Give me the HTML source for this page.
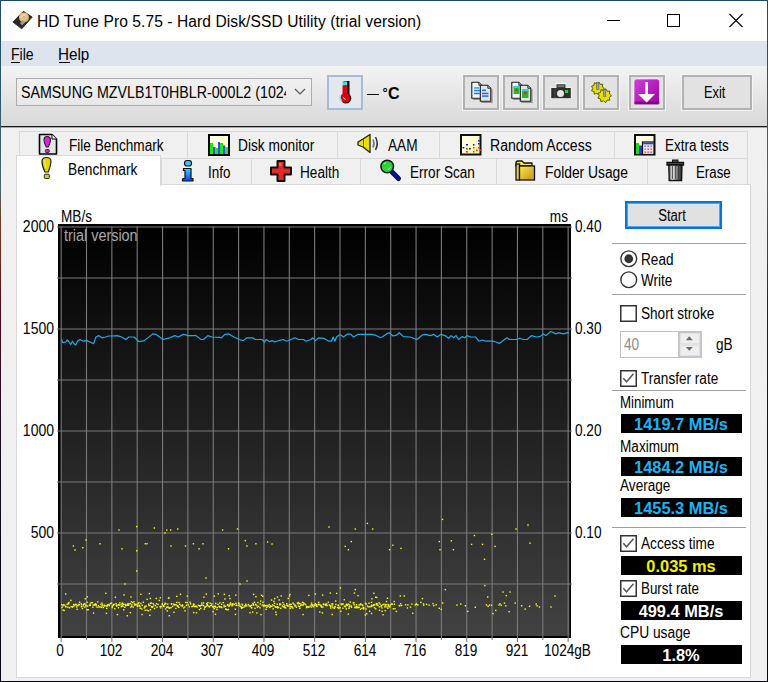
<!DOCTYPE html>
<html><head><meta charset="utf-8"><style>
html,body{margin:0;padding:0;width:768px;height:682px;overflow:hidden;background:#f0f0f0}
body{position:relative;font-family:"Liberation Sans",sans-serif}
.r{position:absolute;display:block}
.t{position:absolute;white-space:pre}
</style></head><body>
<div class="r" style="left:0px;top:0px;width:768px;height:682px;background:#f0f0f0"></div>
<div class="r" style="left:1px;top:1px;width:766px;height:40px;background:#fff"></div>
<div class="r" style="left:1px;top:41px;width:766px;height:25px;background:#dde4ee"></div>
<div class="r" style="left:1px;top:66px;width:766px;height:60px;background:linear-gradient(#f3f3f3,#d8d8d8)"></div>
<div class="r" style="left:1px;top:126px;width:766px;height:1px;background:#1a1a1a"></div>
<div class="r" style="left:1px;top:127px;width:766px;height:1px;background:#a8a8a8"></div>
<div class="r" style="left:0px;top:0px;width:768px;height:1px;background:#1a4a6a"></div>
<div class="r" style="left:0px;top:0px;width:1px;height:682px;background:linear-gradient(#1a4a6a 0px,#2f5a6c 100px,#4a6468 190px,#6e3a1e 225px,#6a301c 260px,#5a0a20 300px,#3a0a20 360px,#1a0c20 430px,#060818 560px,#060818 682px)"></div>
<div class="r" style="left:767px;top:0px;width:1px;height:682px;background:linear-gradient(#1a4a6a 0px,#2f5a6c 100px,#4a6468 190px,#6e3a1e 225px,#6a301c 260px,#5a0a20 300px,#3a0a20 360px,#1a0c20 430px,#060818 560px,#060818 682px)"></div>
<div class="r" style="left:0px;top:681px;width:768px;height:1px;background:#060818"></div>
<svg class="r" style="left:11px;top:9px;" width="24" height="22" viewBox="0 0 24 22">
<defs><radialGradient id="pl" cx="0.45" cy="0.4" r="0.6"><stop offset="0" stop-color="#fde3a8"/><stop offset="1" stop-color="#e9a545"/></radialGradient></defs>
<polygon points="12.4,2.3 21.2,8.1 10.7,19.8 1.9,13" fill="#2a2a2a" stroke="#111" stroke-width="0.8" stroke-linejoin="round"/>
<circle cx="13" cy="8.5" r="5" fill="url(#pl)"/>
<circle cx="13" cy="8.5" r="1.7" fill="#bdbdbd"/>
<polygon points="9,14 12,11 14,13.5 11,16.5" fill="#9a9a9a"/>
</svg>
<div class="t" style="left:37.00px;transform-origin:0 0;top:14.39px;font-size:15.6px;line-height:15.6px;font-weight:normal;color:#000;letter-spacing:0.07px;">HD Tune Pro 5.75 - Hard Disk/SSD Utility (trial version)</div>
<svg class="r" style="left:600px;top:8px;" width="150" height="26" viewBox="0 0 150 26">
<line x1="7" y1="12.5" x2="20" y2="12.5" stroke="#000" stroke-width="1"/>
<rect x="67.5" y="6.5" width="12" height="12" fill="none" stroke="#000" stroke-width="1"/>
<line x1="129.5" y1="6" x2="142.5" y2="19" stroke="#000" stroke-width="1.1"/>
<line x1="142.5" y1="6" x2="129.5" y2="19" stroke="#000" stroke-width="1.1"/>
</svg>
<div class="t" style="left:11.00px;transform-origin:0 0;top:46.96px;font-size:16px;line-height:16px;font-weight:normal;color:#000;letter-spacing:0px;transform:scaleX(0.88);">File</div>
<div class="t" style="left:58.00px;transform-origin:0 0;top:46.96px;font-size:16px;line-height:16px;font-weight:normal;color:#000;letter-spacing:0px;transform:scaleX(0.95);">Help</div>
<div class="r" style="left:11px;top:62px;width:9px;height:1px;background:#000"></div>
<div class="r" style="left:59px;top:62px;width:11px;height:1px;background:#000"></div>
<div class="r" style="left:16px;top:78px;width:296px;height:28px;box-sizing:border-box;border:1px solid #acacac;background:linear-gradient(#f0f0f0,#e8e8e8)"></div>
<div class="r" style="left:17px;top:79px;width:269px;height:26px;overflow:hidden">
<div class="t" style="left:4.00px;transform-origin:0 0;top:5.96px;font-size:16px;line-height:16px;font-weight:normal;color:#000;letter-spacing:0px;transform:scaleX(0.89);">SAMSUNG MZVLB1T0HBLR-000L2 (1024 GB)</div>
</div>
<svg class="r" style="left:292px;top:86px;" width="16" height="12" viewBox="0 0 16 12"><polyline points="3,3 8,8 13,3" fill="none" stroke="#555" stroke-width="1.2"/></svg>
<div class="r" style="left:327px;top:75px;width:36px;height:35px;box-sizing:border-box;border:2px solid #a3bdd9;background:#e4e8ed"></div>
<svg class="r" style="left:335px;top:78px;" width="20" height="28" viewBox="0 0 20 28">
<rect x="8.5" y="3" width="6" height="19" fill="#111"/>
<rect x="7.5" y="3.5" width="4.5" height="4" fill="#40e0e8"/>
<rect x="7.5" y="7.5" width="4.5" height="13" fill="#e00010"/>
<circle cx="11" cy="20.3" r="5.3" fill="#111"/>
<circle cx="10.2" cy="19.8" r="4.8" fill="#e00010"/>
<path d="M5.2,17.5 A5,5 0 0,0 6.5,23" fill="none" stroke="#8de8ee" stroke-width="1.6"/>
<path d="M8.5,19.5 Q8.8,21 10.5,21.2" fill="none" stroke="#fff" stroke-width="1"/>
</svg>
<div class="r" style="left:367px;top:93.9px;width:11.5px;height:1.5px;background:#111"></div>
<div class="t" style="left:382.60px;transform-origin:0 0;top:85.50px;font-size:13px;line-height:13px;font-weight:bold;color:#000;letter-spacing:0px;">&#176;</div>
<div class="t" style="left:388.00px;transform-origin:0 0;top:86.06px;font-size:16px;line-height:16px;font-weight:bold;color:#000;letter-spacing:0px;">C</div>
<div class="r" style="left:463px;top:75.3px;width:36px;height:35px;box-sizing:border-box;border:2px solid #b2b2b2;box-shadow:0 0 0 1px #f4f4f4;background:#e2e2e2"></div>
<div class="r" style="left:503px;top:75.3px;width:36px;height:35px;box-sizing:border-box;border:2px solid #b2b2b2;box-shadow:0 0 0 1px #f4f4f4;background:#e2e2e2"></div>
<div class="r" style="left:543px;top:75.3px;width:36px;height:35px;box-sizing:border-box;border:2px solid #b2b2b2;box-shadow:0 0 0 1px #f4f4f4;background:#e2e2e2"></div>
<div class="r" style="left:583px;top:75.3px;width:36px;height:35px;box-sizing:border-box;border:2px solid #b2b2b2;box-shadow:0 0 0 1px #f4f4f4;background:#e2e2e2"></div>
<div class="r" style="left:629px;top:75.3px;width:36px;height:35px;box-sizing:border-box;border:2px solid #b2b2b2;box-shadow:0 0 0 1px #f4f4f4;background:#e2e2e2"></div>
<svg class="r" style="left:468px;top:79px;" width="28" height="26" viewBox="0 0 28 26"><path d="M15.0,7.3 L15.0,20.5 L4.8,20.5" fill="none" stroke="#000" stroke-width="1.2" opacity="0.35"/><path d="M3.8,3.3 L10.8,3.3 L13.8,6.3 L13.8,19.3 L3.8,19.3 Z" fill="#f6f6f6" stroke="#1a1a1a" stroke-width="1.1" stroke-linejoin="round"/><path d="M10.8,3.3 L10.8,6.3 L13.8,6.3" fill="#aaa" stroke="#1a1a1a" stroke-width="0.8"/><path d="M24.0,10.3 L24.0,23.5 L13.3,23.5" fill="none" stroke="#000" stroke-width="1.2" opacity="0.35"/><path d="M12.3,6.3 L19.8,6.3 L22.8,9.3 L22.8,22.3 L12.3,22.3 Z" fill="#e4e4e4" stroke="#1a1a1a" stroke-width="1.1" stroke-linejoin="round"/><path d="M19.8,6.3 L19.8,9.3 L22.8,9.3" fill="#aaa" stroke="#1a1a1a" stroke-width="0.8"/><rect x="6" y="8.2" width="5" height="1.5" fill="#30a0f0"/><rect x="6" y="10.8" width="6" height="1.5" fill="#1080f0"/><rect x="6" y="13.7" width="6" height="1.5" fill="#1080f0"/><rect x="14" y="10.6" width="4" height="1.5" fill="#1070f0"/><rect x="14" y="13.7" width="6.5" height="1.5" fill="#1070f0"/><rect x="14" y="16.2" width="6.5" height="1.8" fill="#3a80f0"/></svg>
<svg class="r" style="left:508px;top:79px;" width="28" height="26" viewBox="0 0 28 26"><path d="M15.0,7.3 L15.0,20.5 L4.8,20.5" fill="none" stroke="#000" stroke-width="1.2" opacity="0.35"/><path d="M3.8,3.3 L10.8,3.3 L13.8,6.3 L13.8,19.3 L3.8,19.3 Z" fill="#f6f6f6" stroke="#1a1a1a" stroke-width="1.1" stroke-linejoin="round"/><path d="M10.8,3.3 L10.8,6.3 L13.8,6.3" fill="#aaa" stroke="#1a1a1a" stroke-width="0.8"/><path d="M24.0,10.3 L24.0,23.5 L13.3,23.5" fill="none" stroke="#000" stroke-width="1.2" opacity="0.35"/><path d="M12.3,6.3 L19.8,6.3 L22.8,9.3 L22.8,22.3 L12.3,22.3 Z" fill="#e4e4e4" stroke="#1a1a1a" stroke-width="1.1" stroke-linejoin="round"/><path d="M19.8,6.3 L19.8,9.3 L22.8,9.3" fill="#aaa" stroke="#1a1a1a" stroke-width="0.8"/><rect x="5.5" y="7" width="6" height="8" fill="#20c020"/><rect x="5.5" y="7" width="6" height="2" fill="#30d0f0"/><rect x="7.5" y="10" width="2" height="2" fill="#d03020"/><rect x="14" y="10" width="6.5" height="9" fill="#20c020"/><rect x="14" y="10" width="6.5" height="2" fill="#30d0f0"/><rect x="16" y="13" width="2.5" height="2.5" fill="#d03020"/></svg>
<svg class="r" style="left:549px;top:81px;" width="24" height="20" viewBox="0 0 24 20">
<path d="M1.5,6.5 L7,6.5 L7,3 Q7,2 8,2 L16,2 Q17,2 17,3 L17,6.5 L22.5,6.5 L22.5,18 L1.5,18 Z" fill="#fff" opacity="0.9"/>
<path d="M2.2,7 L7.5,7 L7.5,3.3 L16.5,3.3 L16.5,7 L21.8,7 L21.8,17.3 L2.2,17.3 Z" fill="#2e2e2e"/>
<rect x="8.5" y="4.2" width="7" height="2" fill="#777"/>
<line x1="6" y1="7.5" x2="6" y2="17" stroke="#555" stroke-width="0.8"/>
<circle cx="11.5" cy="12.6" r="3.5" fill="#e6e6e6"/>
<rect x="16" y="9" width="3.2" height="3" fill="#10e020"/>
</svg>
<svg class="r" style="left:588px;top:79px;" width="28" height="26" viewBox="0 0 28 26"><polygon points="16.30,9.50 14.29,11.17 14.76,13.74 12.14,13.73 10.85,16.00 8.85,14.31 6.40,15.22 5.96,12.64 3.50,11.76 4.82,9.50 3.50,7.24 5.96,6.36 6.40,3.78 8.85,4.69 10.85,3.00 12.14,5.27 14.76,5.26 14.29,7.83" fill="#e4e000" stroke="#5a5a00" stroke-width="1" stroke-linejoin="round"/><polygon points="23.50,16.70 21.37,18.47 21.86,21.20 19.09,21.19 17.72,23.59 15.60,21.80 13.00,22.76 12.53,20.03 9.92,19.09 11.32,16.70 9.92,14.31 12.53,13.37 13.00,10.64 15.60,11.60 17.72,9.81 19.09,12.21 21.86,12.20 21.37,14.93" fill="#e4e000" stroke="#5a5a00" stroke-width="1" stroke-linejoin="round"/><rect x="8.6" y="3.5" width="2.4" height="7" fill="#9aa0b0" stroke="#555" stroke-width="0.5"/><rect x="15.4" y="10.5" width="2.4" height="7" fill="#9aa0b0" stroke="#555" stroke-width="0.5"/></svg>
<svg class="r" style="left:633px;top:78px;" width="28" height="28" viewBox="0 0 28 28">
<defs><linearGradient id="pg" x1="0" y1="0" x2="1" y2="1"><stop offset="0" stop-color="#d040d8"/><stop offset="1" stop-color="#a000a8"/></linearGradient></defs>
<rect x="1" y="1" width="25.5" height="25.5" rx="2.5" fill="url(#pg)" stroke="#fff" stroke-width="0.6"/>
<rect x="1" y="23.5" width="25.5" height="3" rx="1.5" fill="#700078" opacity="0.7"/>
<rect x="12.3" y="4" width="2.6" height="17" fill="#fff"/>
<polygon points="5,16 22,16 13.6,24.5" fill="#fff"/>
</svg>
<div class="r" style="left:682px;top:75.3px;width:70px;height:35px;box-sizing:border-box;border:2px solid #b2b2b2;box-shadow:0 0 0 1px #f4f4f4;background:#e2e2e2"></div>
<div class="t" style="left:704.00px;transform-origin:0 0;top:85.06px;font-size:16px;line-height:16px;font-weight:normal;color:#000;letter-spacing:0px;transform:scaleX(0.8);">Exit</div>
<div class="r" style="left:16px;top:184px;width:735px;height:494px;box-sizing:border-box;border:1px solid #d9d9d9;background:#fff"></div>
<div class="r" style="left:19px;top:131px;width:169px;height:28px;box-sizing:border-box;border:1px solid #d9d9d9;background:#f0f0f0"></div>
<div class="r" style="left:187px;top:131px;width:151px;height:28px;box-sizing:border-box;border:1px solid #d9d9d9;background:#f0f0f0"></div>
<div class="r" style="left:337px;top:131px;width:103px;height:28px;box-sizing:border-box;border:1px solid #d9d9d9;background:#f0f0f0"></div>
<div class="r" style="left:439px;top:131px;width:176px;height:28px;box-sizing:border-box;border:1px solid #d9d9d9;background:#f0f0f0"></div>
<div class="r" style="left:614px;top:131px;width:134px;height:28px;box-sizing:border-box;border:1px solid #d9d9d9;background:#f0f0f0"></div>
<div class="r" style="left:161px;top:158px;width:91px;height:27px;box-sizing:border-box;border:1px solid #d9d9d9;background:#f0f0f0"></div>
<div class="r" style="left:251px;top:158px;width:110px;height:27px;box-sizing:border-box;border:1px solid #d9d9d9;background:#f0f0f0"></div>
<div class="r" style="left:360px;top:158px;width:137px;height:27px;box-sizing:border-box;border:1px solid #d9d9d9;background:#f0f0f0"></div>
<div class="r" style="left:496px;top:158px;width:152px;height:27px;box-sizing:border-box;border:1px solid #d9d9d9;background:#f0f0f0"></div>
<div class="r" style="left:647px;top:158px;width:101px;height:27px;box-sizing:border-box;border:1px solid #d9d9d9;background:#f0f0f0"></div>
<div class="r" style="left:16px;top:155px;width:145px;height:31px;box-sizing:border-box;border:1px solid #d9d9d9;border-bottom:none;background:#fff"></div>
<div class="t" style="left:69.00px;transform-origin:0 0;top:138.06px;font-size:16px;line-height:16px;font-weight:normal;color:#000;letter-spacing:0px;transform:scaleX(0.851);">File Benchmark</div>
<div class="t" style="left:237.50px;transform-origin:0 0;top:138.06px;font-size:16px;line-height:16px;font-weight:normal;color:#000;letter-spacing:0px;transform:scaleX(0.857);">Disk monitor</div>
<div class="t" style="left:387.50px;transform-origin:0 0;top:138.06px;font-size:16px;line-height:16px;font-weight:normal;color:#000;letter-spacing:0px;transform:scaleX(0.853);">AAM</div>
<div class="t" style="left:489.50px;transform-origin:0 0;top:138.06px;font-size:16px;line-height:16px;font-weight:normal;color:#000;letter-spacing:0px;transform:scaleX(0.88);">Random Access</div>
<div class="t" style="left:664.50px;transform-origin:0 0;top:138.06px;font-size:16px;line-height:16px;font-weight:normal;color:#000;letter-spacing:0px;transform:scaleX(0.843);">Extra tests</div>
<div class="t" style="left:67.50px;transform-origin:0 0;top:161.66px;font-size:16px;line-height:16px;font-weight:normal;color:#000;letter-spacing:0px;transform:scaleX(0.857);">Benchmark</div>
<div class="t" style="left:207.50px;transform-origin:0 0;top:164.66px;font-size:16px;line-height:16px;font-weight:normal;color:#000;letter-spacing:0px;transform:scaleX(0.84);">Info</div>
<div class="t" style="left:300.00px;transform-origin:0 0;top:164.66px;font-size:16px;line-height:16px;font-weight:normal;color:#000;letter-spacing:0px;transform:scaleX(0.851);">Health</div>
<div class="t" style="left:410.00px;transform-origin:0 0;top:164.66px;font-size:16px;line-height:16px;font-weight:normal;color:#000;letter-spacing:0px;transform:scaleX(0.848);">Error Scan</div>
<div class="t" style="left:545.00px;transform-origin:0 0;top:164.66px;font-size:16px;line-height:16px;font-weight:normal;color:#000;letter-spacing:0px;transform:scaleX(0.864);">Folder Usage</div>
<div class="t" style="left:696.00px;transform-origin:0 0;top:164.66px;font-size:16px;line-height:16px;font-weight:normal;color:#000;letter-spacing:0px;transform:scaleX(0.83);">Erase</div>
<svg class="r" style="left:37px;top:132px;" width="22" height="24" viewBox="0 0 22 24">
<path d="M2.5,2.5 L15,2.5 L19.5,7 L19.5,22 L2.5,22 Z" fill="#e4e4e4" stroke="#000" stroke-width="1.6" stroke-linejoin="round"/>
<path d="M15,2.5 L15,7 L19.5,7" fill="#fff" stroke="#000" stroke-width="1"/>
<path d="M10,4.5 Q13.5,4.5 13.5,8 Q13.3,11 11.3,15 L9.3,15 Q7,11 7,8 Q7,4.5 10,4.5 Z" fill="#e020e0" stroke="#202020" stroke-width="1.1"/>
<rect x="8.3" y="17.5" width="4" height="3" rx="1" fill="#e020e0" stroke="#202020" stroke-width="0.9"/>
</svg>
<svg class="r" style="left:40px;top:156px;" width="14" height="25" viewBox="0 0 14 25">
<path d="M6.5,1.5 Q11,1.5 11,5.5 Q10.8,10 8.3,16 L5,16 Q2,10 2,5.5 Q2,1.5 6.5,1.5 Z" fill="#e0d800" stroke="#202020" stroke-width="1.2"/>
<path d="M4.5,4 Q4.5,8 6,12" fill="none" stroke="#f8f080" stroke-width="1"/>
<rect x="4.3" y="18.2" width="5" height="4.3" rx="1" fill="#d8d000" stroke="#202020" stroke-width="1"/>
</svg>
<svg class="r" style="left:206px;top:132px;" width="26" height="26" viewBox="0 0 26 26">
<defs><linearGradient id="dm" x1="0" y1="0" x2="1" y2="1"><stop offset="0" stop-color="#fffff4"/><stop offset="1" stop-color="#fff8a8"/></linearGradient></defs>
<rect x="3" y="3" width="20" height="20" fill="url(#dm)" stroke="#000" stroke-width="2"/>
<rect x="4" y="11" width="3" height="11" fill="#10f010"/>
<rect x="7" y="15" width="2.5" height="7" fill="#4040ff"/>
<rect x="9.5" y="16" width="2.5" height="6" fill="#10f010"/>
<rect x="12" y="10" width="2" height="12" fill="#4040ff"/>
<rect x="14" y="11" width="3" height="11" fill="#10f010"/>
<rect x="17" y="13.5" width="2.2" height="8.5" fill="#4040ff"/>
<rect x="19.2" y="15" width="2.8" height="7" fill="#10f010"/>
</svg>
<svg class="r" style="left:179px;top:158px;" width="17" height="25" viewBox="0 0 17 25">
<defs><linearGradient id="ib" x1="0" y1="0" x2="0" y2="1"><stop offset="0" stop-color="#40d0ff"/><stop offset="1" stop-color="#0040f0"/></linearGradient></defs>
<rect x="5.5" y="2.5" width="7" height="5.5" rx="2.5" fill="#30c8ff" stroke="#101010" stroke-width="1.2"/>
<path d="M4.5,10.5 L12,10.5 L12,20.5 L14,20.5 L14,23 L3.5,23 L3.5,21 L6,20 L6,12.5 L4.5,12.5 Z" fill="url(#ib)" stroke="#101010" stroke-width="1.2" stroke-linejoin="round"/>
</svg>
<svg class="r" style="left:268px;top:158px;" width="26" height="26" viewBox="0 0 26 26">
<path d="M9.5,3 L16.5,3 L16.5,9.5 L23,9.5 L23,16.5 L16.5,16.5 L16.5,23 L9.5,23 L9.5,16.5 L3,16.5 L3,9.5 L9.5,9.5 Z" fill="#e02a2a" stroke="#101010" stroke-width="2" stroke-linejoin="round"/>
<rect x="11" y="5" width="2.5" height="3" fill="#f46060"/>
</svg>
<svg class="r" style="left:355px;top:132px;" width="27" height="24" viewBox="0 0 27 24">
<path d="M3,10 L8,7 L15,2.5 L15,20.5 L8,15 L3,13 Z" fill="#e8e000" stroke="#202020" stroke-width="1.3" stroke-linejoin="round"/>
<line x1="8.5" y1="7" x2="8.5" y2="15" stroke="#606000" stroke-width="0.9"/>
<path d="M18,7.5 Q20,11.5 18,15.5" fill="none" stroke="#777" stroke-width="1.6"/>
<path d="M20.5,5 Q24,11.5 20.5,18" fill="none" stroke="#333" stroke-width="1.5"/>
</svg>
<svg class="r" style="left:378px;top:158px;" width="25" height="25" viewBox="0 0 25 25">
<line x1="12" y1="12" x2="20.5" y2="20.5" stroke="#101010" stroke-width="5" stroke-linecap="round"/>
<line x1="12" y1="12" x2="20.5" y2="20.5" stroke="#0010c0" stroke-width="3" stroke-linecap="round"/>
<circle cx="9.2" cy="8.5" r="6.3" fill="#30d040" stroke="#101010" stroke-width="1.5"/>
<path d="M6,6 L8,4.5" stroke="#b0ffb0" stroke-width="1"/><path d="M10,11.5 L12.5,9.5" stroke="#b0ffb0" stroke-width="1"/>
</svg>
<svg class="r" style="left:458px;top:132px;" width="25" height="25" viewBox="0 0 25 25">
<defs><linearGradient id="ra" x1="0" y1="0" x2="1" y2="1"><stop offset="0" stop-color="#ffffff"/><stop offset="1" stop-color="#fff890"/></linearGradient></defs>
<rect x="3" y="3" width="19.5" height="19.5" fill="url(#ra)" stroke="#101010" stroke-width="2"/>
<g fill="#1010f0"><rect x="8" y="12" width="2" height="1.5"/><rect x="15" y="12" width="1.5" height="1.5"/><rect x="20" y="8" width="1.5" height="1.5"/><rect x="20" y="11" width="1.5" height="1.5"/><rect x="4.5" y="15" width="1.8" height="1.5"/><rect x="11" y="16" width="1.8" height="1.5"/></g>
<g fill="#ff2020"><rect x="8" y="16" width="1.8" height="1.5"/><rect x="8" y="19" width="1.8" height="1.5"/><rect x="15" y="15" width="1.5" height="1.5"/><rect x="15" y="19" width="1.5" height="1.5"/><rect x="20" y="15" width="1.5" height="1.5"/><rect x="18" y="17.5" width="1.5" height="1.5"/><rect x="22" y="17.5" width="1.5" height="1.5"/><rect x="5" y="21" width="1.5" height="1.3"/></g>
</svg>
<svg class="r" style="left:513px;top:158px;" width="25" height="25" viewBox="0 0 25 25">
<defs><linearGradient id="fd" x1="0" y1="0" x2="1" y2="1"><stop offset="0" stop-color="#fae860"/><stop offset="1" stop-color="#c89000"/></linearGradient></defs>
<path d="M3,5 Q3,3 5,3 L9,3 L11,5 L19,5 L19,8 L3,8 Z" fill="#f0e070" stroke="#101010" stroke-width="1.3" stroke-linejoin="round"/>
<rect x="3" y="6" width="3.5" height="16" fill="#e8d040" stroke="#101010" stroke-width="1.3"/>
<rect x="6.5" y="8" width="15" height="14" fill="url(#fd)" stroke="#101010" stroke-width="1.3"/>
<line x1="19" y1="8.5" x2="19" y2="21.5" stroke="#b0b0a0" stroke-width="0.8"/>
</svg>
<svg class="r" style="left:632px;top:132px;" width="26" height="25" viewBox="0 0 26 25">
<defs><linearGradient id="et" x1="0" y1="0" x2="1" y2="1"><stop offset="0" stop-color="#ffffff"/><stop offset="1" stop-color="#fff8b0"/></linearGradient></defs>
<rect x="3" y="3" width="19.5" height="19.5" fill="url(#et)" stroke="#101010" stroke-width="2"/>
<rect x="4" y="11" width="3" height="11" fill="#10e010"/>
<rect x="7" y="13.5" width="3" height="8.5" fill="#3030ff"/>
<rect x="10.5" y="10" width="11.5" height="12.5" fill="#e6e6e6" stroke="#101010" stroke-width="1.2"/>
<rect x="11.2" y="10.7" width="10.2" height="1.6" fill="#2040f0"/>
<g fill="#ff2020"><rect x="12.5" y="13.5" width="1.3" height="1.3"/><rect x="18.5" y="13.5" width="1.3" height="1.3"/><rect x="15.5" y="16.5" width="1.3" height="1.3"/><rect x="18.5" y="16.5" width="1.3" height="1.3"/><rect x="12.5" y="19.5" width="1.3" height="1.3"/><rect x="15.5" y="19.5" width="1.3" height="1.3"/></g>
<g fill="#2040ff"><rect x="15.5" y="13.5" width="1.3" height="1.3"/><rect x="18.5" y="19.5" width="1.3" height="1.3"/></g>
<g fill="#20c020"><rect x="12.5" y="16.5" width="1.3" height="1.3"/></g>
</svg>
<svg class="r" style="left:664px;top:158px;" width="24" height="25" viewBox="0 0 24 25">
<defs><linearGradient id="tr" x1="0" y1="0" x2="1" y2="0"><stop offset="0" stop-color="#505050"/><stop offset="0.28" stop-color="#f4f4f4"/><stop offset="0.5" stop-color="#a0a0a0"/><stop offset="0.8" stop-color="#505050"/><stop offset="1" stop-color="#202020"/></linearGradient></defs>
<path d="M3,4.5 L19.5,4.5 L19.5,7 L3,7 Z" fill="#555" stroke="#101010" stroke-width="1.3"/>
<rect x="8.5" y="2" width="5.5" height="2.5" fill="#444" stroke="#101010" stroke-width="1"/>
<path d="M4.8,7 L18,7 L17.6,22.5 L5.2,22.5 Z" fill="url(#tr)" stroke="#101010" stroke-width="1.3"/>
<line x1="8.5" y1="8" x2="8.5" y2="21" stroke="#303030" stroke-width="0.8"/>
<line x1="11.5" y1="8" x2="11.5" y2="21" stroke="#404040" stroke-width="0.8"/>
<line x1="14.5" y1="8" x2="14.5" y2="21" stroke="#303030" stroke-width="0.8"/>
</svg>
<svg class="r" style="left:40px;top:210px;" width="580" height="460" viewBox="0 0 580 460"><defs><linearGradient id="cg" x1="0" y1="0" x2="0" y2="1"><stop offset="0" stop-color="#000"/><stop offset="1" stop-color="#424242"/></linearGradient></defs><rect x="18" y="14" width="513" height="414" fill="#000"/><rect x="21" y="17" width="508.5" height="409" fill="url(#cg)"/><line x1="21.15" y1="16.5" x2="21.15" y2="432" stroke="#7a7a7a" stroke-width="1.1"/><line x1="46.50" y1="16.5" x2="46.50" y2="430" stroke="#7a7a7a" stroke-width="1.1"/><line x1="71.85" y1="16.5" x2="71.85" y2="432" stroke="#7a7a7a" stroke-width="1.1"/><line x1="97.20" y1="16.5" x2="97.20" y2="430" stroke="#7a7a7a" stroke-width="1.1"/><line x1="122.55" y1="16.5" x2="122.55" y2="432" stroke="#7a7a7a" stroke-width="1.1"/><line x1="147.90" y1="16.5" x2="147.90" y2="430" stroke="#7a7a7a" stroke-width="1.1"/><line x1="173.25" y1="16.5" x2="173.25" y2="432" stroke="#7a7a7a" stroke-width="1.1"/><line x1="198.60" y1="16.5" x2="198.60" y2="430" stroke="#7a7a7a" stroke-width="1.1"/><line x1="223.95" y1="16.5" x2="223.95" y2="432" stroke="#7a7a7a" stroke-width="1.1"/><line x1="249.30" y1="16.5" x2="249.30" y2="430" stroke="#7a7a7a" stroke-width="1.1"/><line x1="274.65" y1="16.5" x2="274.65" y2="432" stroke="#7a7a7a" stroke-width="1.1"/><line x1="300.00" y1="16.5" x2="300.00" y2="430" stroke="#7a7a7a" stroke-width="1.1"/><line x1="325.35" y1="16.5" x2="325.35" y2="432" stroke="#7a7a7a" stroke-width="1.1"/><line x1="350.70" y1="16.5" x2="350.70" y2="430" stroke="#7a7a7a" stroke-width="1.1"/><line x1="376.05" y1="16.5" x2="376.05" y2="432" stroke="#7a7a7a" stroke-width="1.1"/><line x1="401.40" y1="16.5" x2="401.40" y2="430" stroke="#7a7a7a" stroke-width="1.1"/><line x1="426.75" y1="16.5" x2="426.75" y2="432" stroke="#7a7a7a" stroke-width="1.1"/><line x1="452.10" y1="16.5" x2="452.10" y2="430" stroke="#7a7a7a" stroke-width="1.1"/><line x1="477.45" y1="16.5" x2="477.45" y2="432" stroke="#7a7a7a" stroke-width="1.1"/><line x1="502.80" y1="16.5" x2="502.80" y2="430" stroke="#7a7a7a" stroke-width="1.1"/><line x1="528.15" y1="16.5" x2="528.15" y2="432" stroke="#7a7a7a" stroke-width="1.1"/><line x1="17" y1="17.00" x2="532" y2="17.00" stroke="#7a7a7a" stroke-width="1.1"/><line x1="17" y1="68.00" x2="532" y2="68.00" stroke="#7a7a7a" stroke-width="1.1"/><line x1="17" y1="119.00" x2="532" y2="119.00" stroke="#7a7a7a" stroke-width="1.1"/><line x1="17" y1="170.00" x2="532" y2="170.00" stroke="#7a7a7a" stroke-width="1.1"/><line x1="17" y1="221.00" x2="532" y2="221.00" stroke="#7a7a7a" stroke-width="1.1"/><line x1="17" y1="272.00" x2="532" y2="272.00" stroke="#7a7a7a" stroke-width="1.1"/><line x1="17" y1="323.00" x2="532" y2="323.00" stroke="#7a7a7a" stroke-width="1.1"/><line x1="17" y1="374.00" x2="532" y2="374.00" stroke="#7a7a7a" stroke-width="1.1"/><polyline points="21.40,129.50 23.00,132.80 25.60,132.00 27.30,130.00 29.00,132.00 30.70,134.50 32.40,131.20 34.00,133.70 35.80,135.00 37.50,131.20 40.00,129.50 43.40,131.20 46.80,130.60 50.20,132.00 53.50,133.70 56.00,127.00 58.60,125.60 62.00,127.80 65.40,127.00 68.80,126.00 72.20,126.00 77.20,125.60 80.60,126.60 85.70,129.50 89.00,127.00 94.00,127.00 99.20,131.70 104.30,130.60 112.80,123.90 116.20,124.40 123.00,129.50 129.70,127.80 134.80,125.60 138.20,127.00 143.30,124.40 148.40,125.60 156.00,125.60 161.00,129.50 163.60,129.50 167.90,125.60 172.00,127.00 178.90,127.30 181.40,127.80 184.80,124.40 189.00,123.90 190.70,125.20 194.00,127.00 199.20,129.50 203.40,130.60 206.80,127.80 212.70,127.80 215.20,129.50 222.00,129.50 224.60,132.00 226.20,129.50 229.60,131.70 232.20,130.60 234.70,132.00 239.80,130.30 243.20,129.50 246.60,131.20 250.80,129.50 255.00,127.80 258.40,129.50 263.50,129.50 266.00,131.20 271.00,129.50 272.80,127.80 275.40,130.60 278.80,127.80 283.80,128.30 289.00,131.20 291.50,131.20 293.20,127.00 294.90,131.20 296.50,127.00 300.00,124.40 303.30,127.00 307.50,123.90 311.00,124.40 313.50,127.00 317.70,124.40 322.80,124.40 331.20,124.40 335.50,125.20 339.70,127.30 342.20,127.00 346.50,123.90 349.00,122.70 353.20,126.00 356.60,125.20 359.20,122.70 363.40,126.60 370.20,127.00 377.00,129.50 382.00,125.20 385.40,124.40 390.50,125.60 393.90,124.40 397.30,127.00 400.60,124.40 405.00,125.60 408.50,128.30 411.00,125.60 413.50,127.80 416.00,125.60 418.60,129.50 422.00,126.60 424.50,127.80 427.00,125.60 430.50,127.00 435.50,127.00 439.00,131.20 442.30,130.00 445.70,131.20 452.50,131.20 455.90,132.00 459.20,133.40 466.90,127.80 469.40,129.50 476.20,129.50 479.60,128.30 483.00,129.50 487.20,129.50 491.40,125.60 496.50,127.00 499.90,126.60 503.30,123.90 505.80,125.60 510.90,121.50 516.00,123.90 518.50,122.70 523.60,123.90 527.80,122.70 529.00,123.00" fill="none" stroke="#1eaaea" stroke-width="1.2" stroke-linejoin="round"/><rect x="21.31" y="396.79" width="1.4" height="1.4" fill="#ffff00"/><rect x="20.98" y="393.92" width="1.4" height="1.4" fill="#ffff00"/><rect x="22.10" y="395.13" width="1.4" height="1.4" fill="#ffff00"/><rect x="22.61" y="394.09" width="1.4" height="1.4" fill="#ffff00"/><rect x="23.45" y="399.78" width="1.4" height="1.4" fill="#ffff00"/><rect x="23.82" y="394.35" width="1.4" height="1.4" fill="#ffff00"/><rect x="24.83" y="395.42" width="1.4" height="1.4" fill="#ffff00"/><rect x="25.24" y="396.22" width="1.4" height="1.4" fill="#ffff00"/><rect x="26.46" y="393.48" width="1.4" height="1.4" fill="#ffff00"/><rect x="27.80" y="393.17" width="1.4" height="1.4" fill="#ffff00"/><rect x="27.12" y="396.50" width="1.4" height="1.4" fill="#ffff00"/><rect x="27.87" y="392.39" width="1.4" height="1.4" fill="#ffff00"/><rect x="28.19" y="391.92" width="1.4" height="1.4" fill="#ffff00"/><rect x="28.80" y="397.05" width="1.4" height="1.4" fill="#ffff00"/><rect x="30.20" y="389.67" width="1.4" height="1.4" fill="#ffff00"/><rect x="30.43" y="395.90" width="1.4" height="1.4" fill="#ffff00"/><rect x="31.76" y="396.36" width="1.4" height="1.4" fill="#ffff00"/><rect x="32.05" y="395.79" width="1.4" height="1.4" fill="#ffff00"/><rect x="33.36" y="395.25" width="1.4" height="1.4" fill="#ffff00"/><rect x="32.99" y="393.76" width="1.4" height="1.4" fill="#ffff00"/><rect x="34.22" y="394.31" width="1.4" height="1.4" fill="#ffff00"/><rect x="35.77" y="394.16" width="1.4" height="1.4" fill="#ffff00"/><rect x="35.01" y="393.58" width="1.4" height="1.4" fill="#ffff00"/><rect x="36.44" y="398.62" width="1.4" height="1.4" fill="#ffff00"/><rect x="36.06" y="396.21" width="1.4" height="1.4" fill="#ffff00"/><rect x="37.10" y="394.81" width="1.4" height="1.4" fill="#ffff00"/><rect x="38.40" y="393.67" width="1.4" height="1.4" fill="#ffff00"/><rect x="38.25" y="394.20" width="1.4" height="1.4" fill="#ffff00"/><rect x="38.98" y="391.50" width="1.4" height="1.4" fill="#ffff00"/><rect x="40.62" y="393.18" width="1.4" height="1.4" fill="#ffff00"/><rect x="40.74" y="396.05" width="1.4" height="1.4" fill="#ffff00"/><rect x="41.68" y="397.80" width="1.4" height="1.4" fill="#ffff00"/><rect x="40.84" y="394.12" width="1.4" height="1.4" fill="#ffff00"/><rect x="42.50" y="395.32" width="1.4" height="1.4" fill="#ffff00"/><rect x="42.98" y="393.60" width="1.4" height="1.4" fill="#ffff00"/><rect x="42.87" y="394.00" width="1.4" height="1.4" fill="#ffff00"/><rect x="44.08" y="396.47" width="1.4" height="1.4" fill="#ffff00"/><rect x="44.00" y="392.80" width="1.4" height="1.4" fill="#ffff00"/><rect x="44.98" y="394.27" width="1.4" height="1.4" fill="#ffff00"/><rect x="45.37" y="395.12" width="1.4" height="1.4" fill="#ffff00"/><rect x="46.46" y="399.03" width="1.4" height="1.4" fill="#ffff00"/><rect x="46.38" y="391.53" width="1.4" height="1.4" fill="#ffff00"/><rect x="47.50" y="399.05" width="1.4" height="1.4" fill="#ffff00"/><rect x="46.82" y="395.37" width="1.4" height="1.4" fill="#ffff00"/><rect x="48.80" y="394.70" width="1.4" height="1.4" fill="#ffff00"/><rect x="49.54" y="393.25" width="1.4" height="1.4" fill="#ffff00"/><rect x="49.59" y="394.66" width="1.4" height="1.4" fill="#ffff00"/><rect x="50.49" y="391.95" width="1.4" height="1.4" fill="#ffff00"/><rect x="51.66" y="391.99" width="1.4" height="1.4" fill="#ffff00"/><rect x="52.18" y="396.57" width="1.4" height="1.4" fill="#ffff00"/><rect x="52.44" y="394.30" width="1.4" height="1.4" fill="#ffff00"/><rect x="53.53" y="394.41" width="1.4" height="1.4" fill="#ffff00"/><rect x="54.64" y="393.11" width="1.4" height="1.4" fill="#ffff00"/><rect x="54.55" y="393.90" width="1.4" height="1.4" fill="#ffff00"/><rect x="55.50" y="393.54" width="1.4" height="1.4" fill="#ffff00"/><rect x="55.41" y="395.06" width="1.4" height="1.4" fill="#ffff00"/><rect x="56.48" y="396.50" width="1.4" height="1.4" fill="#ffff00"/><rect x="57.71" y="395.01" width="1.4" height="1.4" fill="#ffff00"/><rect x="57.13" y="391.16" width="1.4" height="1.4" fill="#ffff00"/><rect x="58.23" y="396.33" width="1.4" height="1.4" fill="#ffff00"/><rect x="59.38" y="396.27" width="1.4" height="1.4" fill="#ffff00"/><rect x="60.30" y="393.62" width="1.4" height="1.4" fill="#ffff00"/><rect x="60.75" y="396.64" width="1.4" height="1.4" fill="#ffff00"/><rect x="61.25" y="392.46" width="1.4" height="1.4" fill="#ffff00"/><rect x="61.43" y="395.34" width="1.4" height="1.4" fill="#ffff00"/><rect x="62.64" y="396.81" width="1.4" height="1.4" fill="#ffff00"/><rect x="61.83" y="394.18" width="1.4" height="1.4" fill="#ffff00"/><rect x="63.51" y="395.12" width="1.4" height="1.4" fill="#ffff00"/><rect x="63.94" y="395.00" width="1.4" height="1.4" fill="#ffff00"/><rect x="63.82" y="394.54" width="1.4" height="1.4" fill="#ffff00"/><rect x="65.43" y="395.27" width="1.4" height="1.4" fill="#ffff00"/><rect x="66.46" y="395.36" width="1.4" height="1.4" fill="#ffff00"/><rect x="66.00" y="397.69" width="1.4" height="1.4" fill="#ffff00"/><rect x="66.81" y="394.16" width="1.4" height="1.4" fill="#ffff00"/><rect x="67.07" y="394.63" width="1.4" height="1.4" fill="#ffff00"/><rect x="68.32" y="393.74" width="1.4" height="1.4" fill="#ffff00"/><rect x="68.59" y="394.97" width="1.4" height="1.4" fill="#ffff00"/><rect x="69.73" y="393.00" width="1.4" height="1.4" fill="#ffff00"/><rect x="70.71" y="392.35" width="1.4" height="1.4" fill="#ffff00"/><rect x="71.68" y="395.67" width="1.4" height="1.4" fill="#ffff00"/><rect x="71.45" y="396.89" width="1.4" height="1.4" fill="#ffff00"/><rect x="72.62" y="394.17" width="1.4" height="1.4" fill="#ffff00"/><rect x="72.70" y="394.63" width="1.4" height="1.4" fill="#ffff00"/><rect x="73.34" y="393.61" width="1.4" height="1.4" fill="#ffff00"/><rect x="74.15" y="398.06" width="1.4" height="1.4" fill="#ffff00"/><rect x="75.35" y="392.90" width="1.4" height="1.4" fill="#ffff00"/><rect x="75.61" y="394.45" width="1.4" height="1.4" fill="#ffff00"/><rect x="75.97" y="394.94" width="1.4" height="1.4" fill="#ffff00"/><rect x="75.95" y="395.15" width="1.4" height="1.4" fill="#ffff00"/><rect x="77.64" y="393.88" width="1.4" height="1.4" fill="#ffff00"/><rect x="77.75" y="396.99" width="1.4" height="1.4" fill="#ffff00"/><rect x="78.33" y="394.16" width="1.4" height="1.4" fill="#ffff00"/><rect x="78.32" y="394.54" width="1.4" height="1.4" fill="#ffff00"/><rect x="79.11" y="392.21" width="1.4" height="1.4" fill="#ffff00"/><rect x="80.65" y="395.95" width="1.4" height="1.4" fill="#ffff00"/><rect x="80.32" y="394.14" width="1.4" height="1.4" fill="#ffff00"/><rect x="81.41" y="392.71" width="1.4" height="1.4" fill="#ffff00"/><rect x="81.77" y="394.40" width="1.4" height="1.4" fill="#ffff00"/><rect x="82.29" y="395.67" width="1.4" height="1.4" fill="#ffff00"/><rect x="81.87" y="392.58" width="1.4" height="1.4" fill="#ffff00"/><rect x="83.07" y="399.05" width="1.4" height="1.4" fill="#ffff00"/><rect x="82.93" y="393.75" width="1.4" height="1.4" fill="#ffff00"/><rect x="84.12" y="396.65" width="1.4" height="1.4" fill="#ffff00"/><rect x="84.42" y="393.64" width="1.4" height="1.4" fill="#ffff00"/><rect x="84.99" y="394.97" width="1.4" height="1.4" fill="#ffff00"/><rect x="86.12" y="394.50" width="1.4" height="1.4" fill="#ffff00"/><rect x="86.53" y="394.25" width="1.4" height="1.4" fill="#ffff00"/><rect x="87.05" y="394.29" width="1.4" height="1.4" fill="#ffff00"/><rect x="87.18" y="392.90" width="1.4" height="1.4" fill="#ffff00"/><rect x="87.96" y="394.51" width="1.4" height="1.4" fill="#ffff00"/><rect x="88.33" y="393.06" width="1.4" height="1.4" fill="#ffff00"/><rect x="89.66" y="392.91" width="1.4" height="1.4" fill="#ffff00"/><rect x="90.12" y="396.42" width="1.4" height="1.4" fill="#ffff00"/><rect x="90.72" y="391.09" width="1.4" height="1.4" fill="#ffff00"/><rect x="91.04" y="395.67" width="1.4" height="1.4" fill="#ffff00"/><rect x="91.06" y="394.24" width="1.4" height="1.4" fill="#ffff00"/><rect x="91.93" y="391.94" width="1.4" height="1.4" fill="#ffff00"/><rect x="92.49" y="396.49" width="1.4" height="1.4" fill="#ffff00"/><rect x="93.77" y="393.18" width="1.4" height="1.4" fill="#ffff00"/><rect x="93.31" y="391.09" width="1.4" height="1.4" fill="#ffff00"/><rect x="93.87" y="394.42" width="1.4" height="1.4" fill="#ffff00"/><rect x="95.35" y="393.77" width="1.4" height="1.4" fill="#ffff00"/><rect x="94.98" y="393.93" width="1.4" height="1.4" fill="#ffff00"/><rect x="96.79" y="394.45" width="1.4" height="1.4" fill="#ffff00"/><rect x="96.75" y="395.46" width="1.4" height="1.4" fill="#ffff00"/><rect x="97.13" y="395.28" width="1.4" height="1.4" fill="#ffff00"/><rect x="97.40" y="392.89" width="1.4" height="1.4" fill="#ffff00"/><rect x="98.64" y="394.71" width="1.4" height="1.4" fill="#ffff00"/><rect x="98.21" y="391.91" width="1.4" height="1.4" fill="#ffff00"/><rect x="99.31" y="395.79" width="1.4" height="1.4" fill="#ffff00"/><rect x="99.50" y="397.58" width="1.4" height="1.4" fill="#ffff00"/><rect x="100.20" y="392.77" width="1.4" height="1.4" fill="#ffff00"/><rect x="101.06" y="398.31" width="1.4" height="1.4" fill="#ffff00"/><rect x="101.54" y="394.53" width="1.4" height="1.4" fill="#ffff00"/><rect x="102.68" y="391.54" width="1.4" height="1.4" fill="#ffff00"/><rect x="103.57" y="397.16" width="1.4" height="1.4" fill="#ffff00"/><rect x="104.27" y="396.47" width="1.4" height="1.4" fill="#ffff00"/><rect x="104.16" y="395.65" width="1.4" height="1.4" fill="#ffff00"/><rect x="105.47" y="395.41" width="1.4" height="1.4" fill="#ffff00"/><rect x="106.37" y="399.44" width="1.4" height="1.4" fill="#ffff00"/><rect x="106.44" y="388.67" width="1.4" height="1.4" fill="#ffff00"/><rect x="107.78" y="400.08" width="1.4" height="1.4" fill="#ffff00"/><rect x="108.20" y="394.80" width="1.4" height="1.4" fill="#ffff00"/><rect x="108.00" y="393.44" width="1.4" height="1.4" fill="#ffff00"/><rect x="109.35" y="394.88" width="1.4" height="1.4" fill="#ffff00"/><rect x="109.77" y="399.03" width="1.4" height="1.4" fill="#ffff00"/><rect x="109.88" y="392.66" width="1.4" height="1.4" fill="#ffff00"/><rect x="110.56" y="392.26" width="1.4" height="1.4" fill="#ffff00"/><rect x="110.97" y="396.05" width="1.4" height="1.4" fill="#ffff00"/><rect x="111.41" y="396.71" width="1.4" height="1.4" fill="#ffff00"/><rect x="112.40" y="392.86" width="1.4" height="1.4" fill="#ffff00"/><rect x="112.09" y="396.01" width="1.4" height="1.4" fill="#ffff00"/><rect x="113.10" y="394.27" width="1.4" height="1.4" fill="#ffff00"/><rect x="113.84" y="397.85" width="1.4" height="1.4" fill="#ffff00"/><rect x="114.70" y="394.96" width="1.4" height="1.4" fill="#ffff00"/><rect x="115.79" y="393.01" width="1.4" height="1.4" fill="#ffff00"/><rect x="116.28" y="396.57" width="1.4" height="1.4" fill="#ffff00"/><rect x="117.32" y="393.77" width="1.4" height="1.4" fill="#ffff00"/><rect x="118.62" y="389.73" width="1.4" height="1.4" fill="#ffff00"/><rect x="119.42" y="395.94" width="1.4" height="1.4" fill="#ffff00"/><rect x="119.92" y="397.11" width="1.4" height="1.4" fill="#ffff00"/><rect x="120.47" y="395.65" width="1.4" height="1.4" fill="#ffff00"/><rect x="121.58" y="393.18" width="1.4" height="1.4" fill="#ffff00"/><rect x="121.80" y="393.92" width="1.4" height="1.4" fill="#ffff00"/><rect x="122.69" y="394.97" width="1.4" height="1.4" fill="#ffff00"/><rect x="123.16" y="395.83" width="1.4" height="1.4" fill="#ffff00"/><rect x="124.43" y="392.57" width="1.4" height="1.4" fill="#ffff00"/><rect x="123.99" y="393.89" width="1.4" height="1.4" fill="#ffff00"/><rect x="124.84" y="398.27" width="1.4" height="1.4" fill="#ffff00"/><rect x="125.07" y="392.93" width="1.4" height="1.4" fill="#ffff00"/><rect x="125.87" y="396.80" width="1.4" height="1.4" fill="#ffff00"/><rect x="126.48" y="396.32" width="1.4" height="1.4" fill="#ffff00"/><rect x="127.01" y="393.38" width="1.4" height="1.4" fill="#ffff00"/><rect x="127.54" y="396.45" width="1.4" height="1.4" fill="#ffff00"/><rect x="128.42" y="397.42" width="1.4" height="1.4" fill="#ffff00"/><rect x="129.22" y="397.26" width="1.4" height="1.4" fill="#ffff00"/><rect x="130.79" y="393.02" width="1.4" height="1.4" fill="#ffff00"/><rect x="130.35" y="396.93" width="1.4" height="1.4" fill="#ffff00"/><rect x="130.90" y="393.26" width="1.4" height="1.4" fill="#ffff00"/><rect x="131.88" y="395.70" width="1.4" height="1.4" fill="#ffff00"/><rect x="133.58" y="394.27" width="1.4" height="1.4" fill="#ffff00"/><rect x="133.01" y="393.43" width="1.4" height="1.4" fill="#ffff00"/><rect x="134.49" y="393.89" width="1.4" height="1.4" fill="#ffff00"/><rect x="135.16" y="397.78" width="1.4" height="1.4" fill="#ffff00"/><rect x="135.51" y="394.27" width="1.4" height="1.4" fill="#ffff00"/><rect x="136.74" y="395.61" width="1.4" height="1.4" fill="#ffff00"/><rect x="136.10" y="391.73" width="1.4" height="1.4" fill="#ffff00"/><rect x="137.73" y="396.20" width="1.4" height="1.4" fill="#ffff00"/><rect x="137.17" y="394.92" width="1.4" height="1.4" fill="#ffff00"/><rect x="138.19" y="396.70" width="1.4" height="1.4" fill="#ffff00"/><rect x="138.34" y="391.78" width="1.4" height="1.4" fill="#ffff00"/><rect x="138.98" y="393.58" width="1.4" height="1.4" fill="#ffff00"/><rect x="140.32" y="394.82" width="1.4" height="1.4" fill="#ffff00"/><rect x="141.77" y="395.30" width="1.4" height="1.4" fill="#ffff00"/><rect x="141.35" y="395.13" width="1.4" height="1.4" fill="#ffff00"/><rect x="141.88" y="394.25" width="1.4" height="1.4" fill="#ffff00"/><rect x="142.94" y="397.22" width="1.4" height="1.4" fill="#ffff00"/><rect x="144.05" y="396.27" width="1.4" height="1.4" fill="#ffff00"/><rect x="145.19" y="391.70" width="1.4" height="1.4" fill="#ffff00"/><rect x="145.77" y="394.46" width="1.4" height="1.4" fill="#ffff00"/><rect x="146.51" y="391.95" width="1.4" height="1.4" fill="#ffff00"/><rect x="147.63" y="394.19" width="1.4" height="1.4" fill="#ffff00"/><rect x="148.69" y="396.14" width="1.4" height="1.4" fill="#ffff00"/><rect x="149.32" y="391.52" width="1.4" height="1.4" fill="#ffff00"/><rect x="149.95" y="393.15" width="1.4" height="1.4" fill="#ffff00"/><rect x="151.18" y="395.84" width="1.4" height="1.4" fill="#ffff00"/><rect x="152.77" y="393.49" width="1.4" height="1.4" fill="#ffff00"/><rect x="152.11" y="395.62" width="1.4" height="1.4" fill="#ffff00"/><rect x="152.86" y="395.09" width="1.4" height="1.4" fill="#ffff00"/><rect x="153.38" y="393.72" width="1.4" height="1.4" fill="#ffff00"/><rect x="154.02" y="395.84" width="1.4" height="1.4" fill="#ffff00"/><rect x="155.39" y="395.67" width="1.4" height="1.4" fill="#ffff00"/><rect x="154.97" y="395.51" width="1.4" height="1.4" fill="#ffff00"/><rect x="156.35" y="396.32" width="1.4" height="1.4" fill="#ffff00"/><rect x="157.71" y="394.64" width="1.4" height="1.4" fill="#ffff00"/><rect x="158.76" y="398.86" width="1.4" height="1.4" fill="#ffff00"/><rect x="158.75" y="395.01" width="1.4" height="1.4" fill="#ffff00"/><rect x="159.33" y="395.50" width="1.4" height="1.4" fill="#ffff00"/><rect x="160.04" y="397.68" width="1.4" height="1.4" fill="#ffff00"/><rect x="160.27" y="394.73" width="1.4" height="1.4" fill="#ffff00"/><rect x="160.96" y="394.31" width="1.4" height="1.4" fill="#ffff00"/><rect x="161.12" y="392.38" width="1.4" height="1.4" fill="#ffff00"/><rect x="162.79" y="392.21" width="1.4" height="1.4" fill="#ffff00"/><rect x="162.33" y="394.63" width="1.4" height="1.4" fill="#ffff00"/><rect x="163.65" y="398.43" width="1.4" height="1.4" fill="#ffff00"/><rect x="162.88" y="394.93" width="1.4" height="1.4" fill="#ffff00"/><rect x="164.27" y="396.68" width="1.4" height="1.4" fill="#ffff00"/><rect x="164.39" y="396.15" width="1.4" height="1.4" fill="#ffff00"/><rect x="165.72" y="395.38" width="1.4" height="1.4" fill="#ffff00"/><rect x="166.01" y="392.99" width="1.4" height="1.4" fill="#ffff00"/><rect x="166.63" y="393.80" width="1.4" height="1.4" fill="#ffff00"/><rect x="166.88" y="394.72" width="1.4" height="1.4" fill="#ffff00"/><rect x="167.16" y="391.95" width="1.4" height="1.4" fill="#ffff00"/><rect x="168.19" y="395.52" width="1.4" height="1.4" fill="#ffff00"/><rect x="168.81" y="396.23" width="1.4" height="1.4" fill="#ffff00"/><rect x="169.51" y="392.47" width="1.4" height="1.4" fill="#ffff00"/><rect x="170.79" y="394.63" width="1.4" height="1.4" fill="#ffff00"/><rect x="170.01" y="394.97" width="1.4" height="1.4" fill="#ffff00"/><rect x="171.10" y="393.22" width="1.4" height="1.4" fill="#ffff00"/><rect x="172.47" y="396.56" width="1.4" height="1.4" fill="#ffff00"/><rect x="172.13" y="395.85" width="1.4" height="1.4" fill="#ffff00"/><rect x="173.52" y="397.83" width="1.4" height="1.4" fill="#ffff00"/><rect x="173.89" y="395.78" width="1.4" height="1.4" fill="#ffff00"/><rect x="174.51" y="395.47" width="1.4" height="1.4" fill="#ffff00"/><rect x="174.89" y="396.22" width="1.4" height="1.4" fill="#ffff00"/><rect x="174.96" y="392.72" width="1.4" height="1.4" fill="#ffff00"/><rect x="176.23" y="398.74" width="1.4" height="1.4" fill="#ffff00"/><rect x="176.45" y="396.79" width="1.4" height="1.4" fill="#ffff00"/><rect x="177.21" y="393.61" width="1.4" height="1.4" fill="#ffff00"/><rect x="178.50" y="396.02" width="1.4" height="1.4" fill="#ffff00"/><rect x="178.41" y="395.59" width="1.4" height="1.4" fill="#ffff00"/><rect x="179.14" y="392.19" width="1.4" height="1.4" fill="#ffff00"/><rect x="179.31" y="396.35" width="1.4" height="1.4" fill="#ffff00"/><rect x="180.41" y="396.05" width="1.4" height="1.4" fill="#ffff00"/><rect x="181.15" y="396.86" width="1.4" height="1.4" fill="#ffff00"/><rect x="180.94" y="393.53" width="1.4" height="1.4" fill="#ffff00"/><rect x="182.64" y="391.90" width="1.4" height="1.4" fill="#ffff00"/><rect x="183.43" y="394.60" width="1.4" height="1.4" fill="#ffff00"/><rect x="183.38" y="396.13" width="1.4" height="1.4" fill="#ffff00"/><rect x="184.73" y="395.61" width="1.4" height="1.4" fill="#ffff00"/><rect x="184.94" y="398.54" width="1.4" height="1.4" fill="#ffff00"/><rect x="185.34" y="398.50" width="1.4" height="1.4" fill="#ffff00"/><rect x="186.79" y="394.52" width="1.4" height="1.4" fill="#ffff00"/><rect x="186.40" y="399.05" width="1.4" height="1.4" fill="#ffff00"/><rect x="187.04" y="393.93" width="1.4" height="1.4" fill="#ffff00"/><rect x="187.63" y="398.83" width="1.4" height="1.4" fill="#ffff00"/><rect x="187.98" y="395.33" width="1.4" height="1.4" fill="#ffff00"/><rect x="188.74" y="395.12" width="1.4" height="1.4" fill="#ffff00"/><rect x="189.18" y="393.42" width="1.4" height="1.4" fill="#ffff00"/><rect x="189.82" y="392.16" width="1.4" height="1.4" fill="#ffff00"/><rect x="190.19" y="393.87" width="1.4" height="1.4" fill="#ffff00"/><rect x="191.32" y="395.11" width="1.4" height="1.4" fill="#ffff00"/><rect x="191.44" y="393.35" width="1.4" height="1.4" fill="#ffff00"/><rect x="191.94" y="394.19" width="1.4" height="1.4" fill="#ffff00"/><rect x="192.21" y="393.17" width="1.4" height="1.4" fill="#ffff00"/><rect x="193.56" y="393.64" width="1.4" height="1.4" fill="#ffff00"/><rect x="194.66" y="398.52" width="1.4" height="1.4" fill="#ffff00"/><rect x="195.37" y="394.78" width="1.4" height="1.4" fill="#ffff00"/><rect x="195.23" y="392.61" width="1.4" height="1.4" fill="#ffff00"/><rect x="195.85" y="394.52" width="1.4" height="1.4" fill="#ffff00"/><rect x="197.55" y="394.61" width="1.4" height="1.4" fill="#ffff00"/><rect x="197.87" y="392.35" width="1.4" height="1.4" fill="#ffff00"/><rect x="198.20" y="392.78" width="1.4" height="1.4" fill="#ffff00"/><rect x="199.33" y="395.63" width="1.4" height="1.4" fill="#ffff00"/><rect x="199.04" y="394.24" width="1.4" height="1.4" fill="#ffff00"/><rect x="200.77" y="396.69" width="1.4" height="1.4" fill="#ffff00"/><rect x="200.61" y="396.23" width="1.4" height="1.4" fill="#ffff00"/><rect x="201.37" y="393.42" width="1.4" height="1.4" fill="#ffff00"/><rect x="200.92" y="397.64" width="1.4" height="1.4" fill="#ffff00"/><rect x="201.80" y="396.86" width="1.4" height="1.4" fill="#ffff00"/><rect x="201.86" y="394.39" width="1.4" height="1.4" fill="#ffff00"/><rect x="203.20" y="396.50" width="1.4" height="1.4" fill="#ffff00"/><rect x="204.70" y="395.36" width="1.4" height="1.4" fill="#ffff00"/><rect x="204.30" y="395.04" width="1.4" height="1.4" fill="#ffff00"/><rect x="205.10" y="393.63" width="1.4" height="1.4" fill="#ffff00"/><rect x="206.00" y="395.12" width="1.4" height="1.4" fill="#ffff00"/><rect x="207.68" y="393.75" width="1.4" height="1.4" fill="#ffff00"/><rect x="208.43" y="395.10" width="1.4" height="1.4" fill="#ffff00"/><rect x="209.53" y="395.76" width="1.4" height="1.4" fill="#ffff00"/><rect x="209.70" y="395.18" width="1.4" height="1.4" fill="#ffff00"/><rect x="210.74" y="396.84" width="1.4" height="1.4" fill="#ffff00"/><rect x="211.02" y="397.10" width="1.4" height="1.4" fill="#ffff00"/><rect x="210.98" y="394.59" width="1.4" height="1.4" fill="#ffff00"/><rect x="212.59" y="393.68" width="1.4" height="1.4" fill="#ffff00"/><rect x="212.39" y="392.83" width="1.4" height="1.4" fill="#ffff00"/><rect x="213.73" y="391.54" width="1.4" height="1.4" fill="#ffff00"/><rect x="212.89" y="394.44" width="1.4" height="1.4" fill="#ffff00"/><rect x="214.33" y="397.58" width="1.4" height="1.4" fill="#ffff00"/><rect x="215.05" y="393.64" width="1.4" height="1.4" fill="#ffff00"/><rect x="214.89" y="393.99" width="1.4" height="1.4" fill="#ffff00"/><rect x="216.35" y="394.94" width="1.4" height="1.4" fill="#ffff00"/><rect x="216.70" y="396.44" width="1.4" height="1.4" fill="#ffff00"/><rect x="217.18" y="391.83" width="1.4" height="1.4" fill="#ffff00"/><rect x="217.98" y="395.66" width="1.4" height="1.4" fill="#ffff00"/><rect x="219.58" y="393.13" width="1.4" height="1.4" fill="#ffff00"/><rect x="219.31" y="397.05" width="1.4" height="1.4" fill="#ffff00"/><rect x="219.97" y="390.26" width="1.4" height="1.4" fill="#ffff00"/><rect x="221.41" y="394.30" width="1.4" height="1.4" fill="#ffff00"/><rect x="222.59" y="395.38" width="1.4" height="1.4" fill="#ffff00"/><rect x="222.29" y="391.60" width="1.4" height="1.4" fill="#ffff00"/><rect x="223.40" y="394.39" width="1.4" height="1.4" fill="#ffff00"/><rect x="223.37" y="394.90" width="1.4" height="1.4" fill="#ffff00"/><rect x="224.30" y="395.11" width="1.4" height="1.4" fill="#ffff00"/><rect x="225.06" y="395.19" width="1.4" height="1.4" fill="#ffff00"/><rect x="225.37" y="398.62" width="1.4" height="1.4" fill="#ffff00"/><rect x="226.04" y="396.72" width="1.4" height="1.4" fill="#ffff00"/><rect x="226.11" y="394.69" width="1.4" height="1.4" fill="#ffff00"/><rect x="227.06" y="395.42" width="1.4" height="1.4" fill="#ffff00"/><rect x="228.05" y="395.40" width="1.4" height="1.4" fill="#ffff00"/><rect x="228.49" y="393.85" width="1.4" height="1.4" fill="#ffff00"/><rect x="229.16" y="396.71" width="1.4" height="1.4" fill="#ffff00"/><rect x="229.84" y="395.63" width="1.4" height="1.4" fill="#ffff00"/><rect x="229.94" y="395.29" width="1.4" height="1.4" fill="#ffff00"/><rect x="230.84" y="389.35" width="1.4" height="1.4" fill="#ffff00"/><rect x="231.19" y="395.71" width="1.4" height="1.4" fill="#ffff00"/><rect x="231.88" y="394.23" width="1.4" height="1.4" fill="#ffff00"/><rect x="232.53" y="398.12" width="1.4" height="1.4" fill="#ffff00"/><rect x="233.35" y="394.82" width="1.4" height="1.4" fill="#ffff00"/><rect x="233.16" y="390.62" width="1.4" height="1.4" fill="#ffff00"/><rect x="234.41" y="395.96" width="1.4" height="1.4" fill="#ffff00"/><rect x="233.86" y="392.64" width="1.4" height="1.4" fill="#ffff00"/><rect x="235.66" y="396.47" width="1.4" height="1.4" fill="#ffff00"/><rect x="235.19" y="396.50" width="1.4" height="1.4" fill="#ffff00"/><rect x="236.58" y="393.51" width="1.4" height="1.4" fill="#ffff00"/><rect x="236.96" y="395.87" width="1.4" height="1.4" fill="#ffff00"/><rect x="237.01" y="397.09" width="1.4" height="1.4" fill="#ffff00"/><rect x="238.48" y="389.22" width="1.4" height="1.4" fill="#ffff00"/><rect x="238.00" y="396.86" width="1.4" height="1.4" fill="#ffff00"/><rect x="239.07" y="394.25" width="1.4" height="1.4" fill="#ffff00"/><rect x="238.98" y="393.22" width="1.4" height="1.4" fill="#ffff00"/><rect x="240.07" y="397.57" width="1.4" height="1.4" fill="#ffff00"/><rect x="239.95" y="393.51" width="1.4" height="1.4" fill="#ffff00"/><rect x="241.71" y="395.20" width="1.4" height="1.4" fill="#ffff00"/><rect x="242.18" y="391.87" width="1.4" height="1.4" fill="#ffff00"/><rect x="242.57" y="396.15" width="1.4" height="1.4" fill="#ffff00"/><rect x="243.19" y="393.76" width="1.4" height="1.4" fill="#ffff00"/><rect x="243.40" y="395.95" width="1.4" height="1.4" fill="#ffff00"/><rect x="244.22" y="395.18" width="1.4" height="1.4" fill="#ffff00"/><rect x="244.06" y="396.85" width="1.4" height="1.4" fill="#ffff00"/><rect x="244.95" y="397.14" width="1.4" height="1.4" fill="#ffff00"/><rect x="246.19" y="394.45" width="1.4" height="1.4" fill="#ffff00"/><rect x="246.03" y="393.02" width="1.4" height="1.4" fill="#ffff00"/><rect x="246.82" y="395.02" width="1.4" height="1.4" fill="#ffff00"/><rect x="247.37" y="395.44" width="1.4" height="1.4" fill="#ffff00"/><rect x="248.72" y="394.06" width="1.4" height="1.4" fill="#ffff00"/><rect x="249.47" y="397.60" width="1.4" height="1.4" fill="#ffff00"/><rect x="249.43" y="395.84" width="1.4" height="1.4" fill="#ffff00"/><rect x="250.19" y="393.88" width="1.4" height="1.4" fill="#ffff00"/><rect x="250.30" y="393.64" width="1.4" height="1.4" fill="#ffff00"/><rect x="251.20" y="396.03" width="1.4" height="1.4" fill="#ffff00"/><rect x="251.04" y="396.30" width="1.4" height="1.4" fill="#ffff00"/><rect x="252.22" y="397.33" width="1.4" height="1.4" fill="#ffff00"/><rect x="252.35" y="392.34" width="1.4" height="1.4" fill="#ffff00"/><rect x="253.19" y="393.43" width="1.4" height="1.4" fill="#ffff00"/><rect x="254.30" y="394.37" width="1.4" height="1.4" fill="#ffff00"/><rect x="254.27" y="395.26" width="1.4" height="1.4" fill="#ffff00"/><rect x="255.69" y="396.64" width="1.4" height="1.4" fill="#ffff00"/><rect x="255.06" y="395.16" width="1.4" height="1.4" fill="#ffff00"/><rect x="256.75" y="392.32" width="1.4" height="1.4" fill="#ffff00"/><rect x="257.74" y="395.40" width="1.4" height="1.4" fill="#ffff00"/><rect x="257.21" y="393.06" width="1.4" height="1.4" fill="#ffff00"/><rect x="258.63" y="393.00" width="1.4" height="1.4" fill="#ffff00"/><rect x="257.84" y="391.83" width="1.4" height="1.4" fill="#ffff00"/><rect x="259.11" y="397.72" width="1.4" height="1.4" fill="#ffff00"/><rect x="258.99" y="395.97" width="1.4" height="1.4" fill="#ffff00"/><rect x="260.03" y="394.74" width="1.4" height="1.4" fill="#ffff00"/><rect x="260.04" y="393.07" width="1.4" height="1.4" fill="#ffff00"/><rect x="261.35" y="394.38" width="1.4" height="1.4" fill="#ffff00"/><rect x="261.77" y="391.57" width="1.4" height="1.4" fill="#ffff00"/><rect x="262.69" y="393.56" width="1.4" height="1.4" fill="#ffff00"/><rect x="262.49" y="394.28" width="1.4" height="1.4" fill="#ffff00"/><rect x="262.96" y="392.04" width="1.4" height="1.4" fill="#ffff00"/><rect x="264.09" y="393.22" width="1.4" height="1.4" fill="#ffff00"/><rect x="265.04" y="394.19" width="1.4" height="1.4" fill="#ffff00"/><rect x="265.93" y="395.90" width="1.4" height="1.4" fill="#ffff00"/><rect x="265.87" y="396.95" width="1.4" height="1.4" fill="#ffff00"/><rect x="267.57" y="396.48" width="1.4" height="1.4" fill="#ffff00"/><rect x="266.96" y="396.26" width="1.4" height="1.4" fill="#ffff00"/><rect x="268.31" y="396.27" width="1.4" height="1.4" fill="#ffff00"/><rect x="269.52" y="395.38" width="1.4" height="1.4" fill="#ffff00"/><rect x="270.56" y="394.10" width="1.4" height="1.4" fill="#ffff00"/><rect x="270.63" y="396.42" width="1.4" height="1.4" fill="#ffff00"/><rect x="271.63" y="394.19" width="1.4" height="1.4" fill="#ffff00"/><rect x="270.93" y="392.34" width="1.4" height="1.4" fill="#ffff00"/><rect x="271.81" y="395.04" width="1.4" height="1.4" fill="#ffff00"/><rect x="272.74" y="396.11" width="1.4" height="1.4" fill="#ffff00"/><rect x="273.43" y="394.14" width="1.4" height="1.4" fill="#ffff00"/><rect x="274.79" y="393.07" width="1.4" height="1.4" fill="#ffff00"/><rect x="273.84" y="394.68" width="1.4" height="1.4" fill="#ffff00"/><rect x="275.79" y="393.97" width="1.4" height="1.4" fill="#ffff00"/><rect x="275.34" y="394.69" width="1.4" height="1.4" fill="#ffff00"/><rect x="276.11" y="395.29" width="1.4" height="1.4" fill="#ffff00"/><rect x="276.19" y="395.72" width="1.4" height="1.4" fill="#ffff00"/><rect x="277.78" y="393.58" width="1.4" height="1.4" fill="#ffff00"/><rect x="277.95" y="391.63" width="1.4" height="1.4" fill="#ffff00"/><rect x="277.91" y="393.93" width="1.4" height="1.4" fill="#ffff00"/><rect x="279.12" y="393.94" width="1.4" height="1.4" fill="#ffff00"/><rect x="279.94" y="394.97" width="1.4" height="1.4" fill="#ffff00"/><rect x="280.28" y="394.69" width="1.4" height="1.4" fill="#ffff00"/><rect x="280.85" y="396.25" width="1.4" height="1.4" fill="#ffff00"/><rect x="280.88" y="396.18" width="1.4" height="1.4" fill="#ffff00"/><rect x="282.80" y="393.88" width="1.4" height="1.4" fill="#ffff00"/><rect x="282.21" y="396.37" width="1.4" height="1.4" fill="#ffff00"/><rect x="282.86" y="393.28" width="1.4" height="1.4" fill="#ffff00"/><rect x="284.74" y="393.80" width="1.4" height="1.4" fill="#ffff00"/><rect x="284.79" y="393.83" width="1.4" height="1.4" fill="#ffff00"/><rect x="284.83" y="394.71" width="1.4" height="1.4" fill="#ffff00"/><rect x="284.92" y="393.73" width="1.4" height="1.4" fill="#ffff00"/><rect x="286.31" y="394.94" width="1.4" height="1.4" fill="#ffff00"/><rect x="286.01" y="393.26" width="1.4" height="1.4" fill="#ffff00"/><rect x="287.59" y="391.49" width="1.4" height="1.4" fill="#ffff00"/><rect x="288.60" y="394.31" width="1.4" height="1.4" fill="#ffff00"/><rect x="289.75" y="395.77" width="1.4" height="1.4" fill="#ffff00"/><rect x="290.05" y="394.82" width="1.4" height="1.4" fill="#ffff00"/><rect x="290.03" y="397.36" width="1.4" height="1.4" fill="#ffff00"/><rect x="291.46" y="395.27" width="1.4" height="1.4" fill="#ffff00"/><rect x="291.15" y="393.11" width="1.4" height="1.4" fill="#ffff00"/><rect x="292.12" y="396.94" width="1.4" height="1.4" fill="#ffff00"/><rect x="292.01" y="393.31" width="1.4" height="1.4" fill="#ffff00"/><rect x="293.48" y="397.59" width="1.4" height="1.4" fill="#ffff00"/><rect x="294.23" y="396.00" width="1.4" height="1.4" fill="#ffff00"/><rect x="294.30" y="396.28" width="1.4" height="1.4" fill="#ffff00"/><rect x="295.00" y="390.34" width="1.4" height="1.4" fill="#ffff00"/><rect x="295.12" y="393.82" width="1.4" height="1.4" fill="#ffff00"/><rect x="296.76" y="396.91" width="1.4" height="1.4" fill="#ffff00"/><rect x="297.51" y="394.74" width="1.4" height="1.4" fill="#ffff00"/><rect x="297.75" y="394.48" width="1.4" height="1.4" fill="#ffff00"/><rect x="298.16" y="397.73" width="1.4" height="1.4" fill="#ffff00"/><rect x="298.18" y="396.51" width="1.4" height="1.4" fill="#ffff00"/><rect x="299.42" y="397.06" width="1.4" height="1.4" fill="#ffff00"/><rect x="300.37" y="393.34" width="1.4" height="1.4" fill="#ffff00"/><rect x="301.49" y="393.27" width="1.4" height="1.4" fill="#ffff00"/><rect x="301.18" y="393.90" width="1.4" height="1.4" fill="#ffff00"/><rect x="302.37" y="393.19" width="1.4" height="1.4" fill="#ffff00"/><rect x="302.25" y="397.52" width="1.4" height="1.4" fill="#ffff00"/><rect x="303.73" y="395.44" width="1.4" height="1.4" fill="#ffff00"/><rect x="303.54" y="389.04" width="1.4" height="1.4" fill="#ffff00"/><rect x="304.79" y="396.07" width="1.4" height="1.4" fill="#ffff00"/><rect x="304.79" y="395.57" width="1.4" height="1.4" fill="#ffff00"/><rect x="305.64" y="394.17" width="1.4" height="1.4" fill="#ffff00"/><rect x="305.60" y="398.20" width="1.4" height="1.4" fill="#ffff00"/><rect x="305.86" y="393.54" width="1.4" height="1.4" fill="#ffff00"/><rect x="306.61" y="394.56" width="1.4" height="1.4" fill="#ffff00"/><rect x="307.67" y="393.50" width="1.4" height="1.4" fill="#ffff00"/><rect x="306.87" y="394.39" width="1.4" height="1.4" fill="#ffff00"/><rect x="308.29" y="397.58" width="1.4" height="1.4" fill="#ffff00"/><rect x="308.57" y="396.05" width="1.4" height="1.4" fill="#ffff00"/><rect x="309.60" y="391.35" width="1.4" height="1.4" fill="#ffff00"/><rect x="308.84" y="394.32" width="1.4" height="1.4" fill="#ffff00"/><rect x="310.63" y="395.55" width="1.4" height="1.4" fill="#ffff00"/><rect x="310.65" y="395.68" width="1.4" height="1.4" fill="#ffff00"/><rect x="310.87" y="396.61" width="1.4" height="1.4" fill="#ffff00"/><rect x="312.53" y="392.23" width="1.4" height="1.4" fill="#ffff00"/><rect x="313.23" y="392.08" width="1.4" height="1.4" fill="#ffff00"/><rect x="313.43" y="394.02" width="1.4" height="1.4" fill="#ffff00"/><rect x="314.49" y="396.30" width="1.4" height="1.4" fill="#ffff00"/><rect x="314.27" y="396.93" width="1.4" height="1.4" fill="#ffff00"/><rect x="315.74" y="397.01" width="1.4" height="1.4" fill="#ffff00"/><rect x="315.79" y="394.11" width="1.4" height="1.4" fill="#ffff00"/><rect x="316.16" y="395.88" width="1.4" height="1.4" fill="#ffff00"/><rect x="317.22" y="396.53" width="1.4" height="1.4" fill="#ffff00"/><rect x="317.21" y="397.03" width="1.4" height="1.4" fill="#ffff00"/><rect x="318.50" y="396.54" width="1.4" height="1.4" fill="#ffff00"/><rect x="318.38" y="394.27" width="1.4" height="1.4" fill="#ffff00"/><rect x="319.48" y="394.05" width="1.4" height="1.4" fill="#ffff00"/><rect x="319.73" y="398.53" width="1.4" height="1.4" fill="#ffff00"/><rect x="319.86" y="393.23" width="1.4" height="1.4" fill="#ffff00"/><rect x="320.08" y="393.67" width="1.4" height="1.4" fill="#ffff00"/><rect x="321.47" y="394.12" width="1.4" height="1.4" fill="#ffff00"/><rect x="321.21" y="397.72" width="1.4" height="1.4" fill="#ffff00"/><rect x="322.14" y="394.88" width="1.4" height="1.4" fill="#ffff00"/><rect x="322.65" y="396.89" width="1.4" height="1.4" fill="#ffff00"/><rect x="322.89" y="398.18" width="1.4" height="1.4" fill="#ffff00"/><rect x="323.17" y="397.27" width="1.4" height="1.4" fill="#ffff00"/><rect x="324.75" y="392.64" width="1.4" height="1.4" fill="#ffff00"/><rect x="325.27" y="398.27" width="1.4" height="1.4" fill="#ffff00"/><rect x="325.47" y="393.28" width="1.4" height="1.4" fill="#ffff00"/><rect x="326.78" y="395.26" width="1.4" height="1.4" fill="#ffff00"/><rect x="327.50" y="396.21" width="1.4" height="1.4" fill="#ffff00"/><rect x="328.26" y="392.48" width="1.4" height="1.4" fill="#ffff00"/><rect x="329.01" y="396.05" width="1.4" height="1.4" fill="#ffff00"/><rect x="328.94" y="400.54" width="1.4" height="1.4" fill="#ffff00"/><rect x="330.45" y="395.89" width="1.4" height="1.4" fill="#ffff00"/><rect x="330.54" y="395.48" width="1.4" height="1.4" fill="#ffff00"/><rect x="330.92" y="394.51" width="1.4" height="1.4" fill="#ffff00"/><rect x="330.82" y="391.64" width="1.4" height="1.4" fill="#ffff00"/><rect x="332.15" y="395.23" width="1.4" height="1.4" fill="#ffff00"/><rect x="332.91" y="394.64" width="1.4" height="1.4" fill="#ffff00"/><rect x="332.92" y="394.18" width="1.4" height="1.4" fill="#ffff00"/><rect x="333.89" y="397.04" width="1.4" height="1.4" fill="#ffff00"/><rect x="334.05" y="394.00" width="1.4" height="1.4" fill="#ffff00"/><rect x="335.02" y="398.07" width="1.4" height="1.4" fill="#ffff00"/><rect x="335.65" y="392.93" width="1.4" height="1.4" fill="#ffff00"/><rect x="335.95" y="394.15" width="1.4" height="1.4" fill="#ffff00"/><rect x="336.41" y="392.98" width="1.4" height="1.4" fill="#ffff00"/><rect x="337.21" y="394.60" width="1.4" height="1.4" fill="#ffff00"/><rect x="338.51" y="396.19" width="1.4" height="1.4" fill="#ffff00"/><rect x="338.33" y="392.09" width="1.4" height="1.4" fill="#ffff00"/><rect x="339.44" y="393.35" width="1.4" height="1.4" fill="#ffff00"/><rect x="338.85" y="399.60" width="1.4" height="1.4" fill="#ffff00"/><rect x="340.72" y="394.84" width="1.4" height="1.4" fill="#ffff00"/><rect x="340.29" y="395.82" width="1.4" height="1.4" fill="#ffff00"/><rect x="341.30" y="397.22" width="1.4" height="1.4" fill="#ffff00"/><rect x="342.10" y="394.09" width="1.4" height="1.4" fill="#ffff00"/><rect x="343.28" y="393.54" width="1.4" height="1.4" fill="#ffff00"/><rect x="344.25" y="396.39" width="1.4" height="1.4" fill="#ffff00"/><rect x="344.33" y="395.25" width="1.4" height="1.4" fill="#ffff00"/><rect x="345.02" y="394.32" width="1.4" height="1.4" fill="#ffff00"/><rect x="345.28" y="393.76" width="1.4" height="1.4" fill="#ffff00"/><rect x="346.29" y="396.09" width="1.4" height="1.4" fill="#ffff00"/><rect x="345.81" y="390.78" width="1.4" height="1.4" fill="#ffff00"/><rect x="347.17" y="397.64" width="1.4" height="1.4" fill="#ffff00"/><rect x="347.41" y="393.81" width="1.4" height="1.4" fill="#ffff00"/><rect x="348.30" y="396.08" width="1.4" height="1.4" fill="#ffff00"/><rect x="347.89" y="394.91" width="1.4" height="1.4" fill="#ffff00"/><rect x="349.60" y="394.27" width="1.4" height="1.4" fill="#ffff00"/><rect x="349.09" y="396.13" width="1.4" height="1.4" fill="#ffff00"/><rect x="350.78" y="393.42" width="1.4" height="1.4" fill="#ffff00"/><rect x="351.59" y="393.46" width="1.4" height="1.4" fill="#ffff00"/><rect x="352.56" y="398.10" width="1.4" height="1.4" fill="#ffff00"/><rect x="353.44" y="390.78" width="1.4" height="1.4" fill="#ffff00"/><rect x="353.73" y="393.50" width="1.4" height="1.4" fill="#ffff00"/><rect x="354.22" y="398.00" width="1.4" height="1.4" fill="#ffff00"/><rect x="358.58" y="395.01" width="1.4" height="1.4" fill="#ffff00"/><rect x="359.25" y="394.92" width="1.4" height="1.4" fill="#ffff00"/><rect x="359.92" y="393.05" width="1.4" height="1.4" fill="#ffff00"/><rect x="360.92" y="394.83" width="1.4" height="1.4" fill="#ffff00"/><rect x="364.92" y="394.17" width="1.4" height="1.4" fill="#ffff00"/><rect x="366.72" y="397.23" width="1.4" height="1.4" fill="#ffff00"/><rect x="367.21" y="394.20" width="1.4" height="1.4" fill="#ffff00"/><rect x="369.83" y="396.41" width="1.4" height="1.4" fill="#ffff00"/><rect x="371.18" y="393.37" width="1.4" height="1.4" fill="#ffff00"/><rect x="374.58" y="394.20" width="1.4" height="1.4" fill="#ffff00"/><rect x="375.54" y="393.15" width="1.4" height="1.4" fill="#ffff00"/><rect x="376.15" y="393.80" width="1.4" height="1.4" fill="#ffff00"/><rect x="377.15" y="394.24" width="1.4" height="1.4" fill="#ffff00"/><rect x="380.16" y="391.64" width="1.4" height="1.4" fill="#ffff00"/><rect x="382.78" y="393.26" width="1.4" height="1.4" fill="#ffff00"/><rect x="383.06" y="394.45" width="1.4" height="1.4" fill="#ffff00"/><rect x="385.86" y="393.59" width="1.4" height="1.4" fill="#ffff00"/><rect x="388.42" y="394.48" width="1.4" height="1.4" fill="#ffff00"/><rect x="392.29" y="392.92" width="1.4" height="1.4" fill="#ffff00"/><rect x="393.11" y="394.92" width="1.4" height="1.4" fill="#ffff00"/><rect x="395.50" y="394.02" width="1.4" height="1.4" fill="#ffff00"/><rect x="398.56" y="397.60" width="1.4" height="1.4" fill="#ffff00"/><rect x="400.58" y="398.70" width="1.4" height="1.4" fill="#ffff00"/><rect x="401.92" y="392.36" width="1.4" height="1.4" fill="#ffff00"/><rect x="416.34" y="394.33" width="1.4" height="1.4" fill="#ffff00"/><rect x="420.09" y="393.39" width="1.4" height="1.4" fill="#ffff00"/><rect x="424.66" y="395.04" width="1.4" height="1.4" fill="#ffff00"/><rect x="434.59" y="396.56" width="1.4" height="1.4" fill="#ffff00"/><rect x="445.74" y="394.20" width="1.4" height="1.4" fill="#ffff00"/><rect x="447.37" y="395.62" width="1.4" height="1.4" fill="#ffff00"/><rect x="448.79" y="394.39" width="1.4" height="1.4" fill="#ffff00"/><rect x="450.83" y="394.54" width="1.4" height="1.4" fill="#ffff00"/><rect x="458.33" y="394.28" width="1.4" height="1.4" fill="#ffff00"/><rect x="459.30" y="393.15" width="1.4" height="1.4" fill="#ffff00"/><rect x="460.51" y="394.60" width="1.4" height="1.4" fill="#ffff00"/><rect x="463.77" y="392.48" width="1.4" height="1.4" fill="#ffff00"/><rect x="465.10" y="395.10" width="1.4" height="1.4" fill="#ffff00"/><rect x="474.49" y="392.37" width="1.4" height="1.4" fill="#ffff00"/><rect x="480.91" y="395.06" width="1.4" height="1.4" fill="#ffff00"/><rect x="484.49" y="398.40" width="1.4" height="1.4" fill="#ffff00"/><rect x="488.87" y="395.61" width="1.4" height="1.4" fill="#ffff00"/><rect x="496.39" y="395.09" width="1.4" height="1.4" fill="#ffff00"/><rect x="184.24" y="388.24" width="1.4" height="1.4" fill="#ffff00"/><rect x="212.96" y="383.70" width="1.4" height="1.4" fill="#ffff00"/><rect x="194.79" y="403.75" width="1.4" height="1.4" fill="#ffff00"/><rect x="44.65" y="388.03" width="1.4" height="1.4" fill="#ffff00"/><rect x="86.58" y="405.06" width="1.4" height="1.4" fill="#ffff00"/><rect x="177.57" y="383.15" width="1.4" height="1.4" fill="#ffff00"/><rect x="109.14" y="404.60" width="1.4" height="1.4" fill="#ffff00"/><rect x="189.23" y="387.84" width="1.4" height="1.4" fill="#ffff00"/><rect x="330.91" y="402.79" width="1.4" height="1.4" fill="#ffff00"/><rect x="262.39" y="403.87" width="1.4" height="1.4" fill="#ffff00"/><rect x="455.06" y="399.76" width="1.4" height="1.4" fill="#ffff00"/><rect x="331.25" y="388.09" width="1.4" height="1.4" fill="#ffff00"/><rect x="155.80" y="402.06" width="1.4" height="1.4" fill="#ffff00"/><rect x="234.02" y="387.96" width="1.4" height="1.4" fill="#ffff00"/><rect x="222.04" y="385.56" width="1.4" height="1.4" fill="#ffff00"/><rect x="100.14" y="383.57" width="1.4" height="1.4" fill="#ffff00"/><rect x="215.24" y="385.97" width="1.4" height="1.4" fill="#ffff00"/><rect x="104.51" y="399.55" width="1.4" height="1.4" fill="#ffff00"/><rect x="336.13" y="386.76" width="1.4" height="1.4" fill="#ffff00"/><rect x="211.98" y="401.29" width="1.4" height="1.4" fill="#ffff00"/><rect x="127.79" y="387.42" width="1.4" height="1.4" fill="#ffff00"/><rect x="235.54" y="403.89" width="1.4" height="1.4" fill="#ffff00"/><rect x="128.60" y="404.98" width="1.4" height="1.4" fill="#ffff00"/><rect x="313.75" y="382.32" width="1.4" height="1.4" fill="#ffff00"/><rect x="248.78" y="385.39" width="1.4" height="1.4" fill="#ffff00"/><rect x="324.67" y="404.38" width="1.4" height="1.4" fill="#ffff00"/><rect x="46.64" y="386.14" width="1.4" height="1.4" fill="#ffff00"/><rect x="465.60" y="384.96" width="1.4" height="1.4" fill="#ffff00"/><rect x="128.31" y="387.09" width="1.4" height="1.4" fill="#ffff00"/><rect x="216.21" y="402.24" width="1.4" height="1.4" fill="#ffff00"/><rect x="90.25" y="386.29" width="1.4" height="1.4" fill="#ffff00"/><rect x="317.27" y="384.98" width="1.4" height="1.4" fill="#ffff00"/><rect x="334.93" y="386.57" width="1.4" height="1.4" fill="#ffff00"/><rect x="74.74" y="386.59" width="1.4" height="1.4" fill="#ffff00"/><rect x="236.71" y="386.35" width="1.4" height="1.4" fill="#ffff00"/><rect x="468.45" y="401.03" width="1.4" height="1.4" fill="#ffff00"/><rect x="163.22" y="386.47" width="1.4" height="1.4" fill="#ffff00"/><rect x="220.79" y="384.67" width="1.4" height="1.4" fill="#ffff00"/><rect x="281.75" y="402.25" width="1.4" height="1.4" fill="#ffff00"/><rect x="346.82" y="387.60" width="1.4" height="1.4" fill="#ffff00"/><rect x="126.64" y="400.22" width="1.4" height="1.4" fill="#ffff00"/><rect x="165.67" y="383.42" width="1.4" height="1.4" fill="#ffff00"/><rect x="172.37" y="401.04" width="1.4" height="1.4" fill="#ffff00"/><rect x="173.61" y="385.44" width="1.4" height="1.4" fill="#ffff00"/><rect x="65.13" y="382.60" width="1.4" height="1.4" fill="#ffff00"/><rect x="152.99" y="401.90" width="1.4" height="1.4" fill="#ffff00"/><rect x="52.88" y="402.46" width="1.4" height="1.4" fill="#ffff00"/><rect x="119.59" y="387.04" width="1.4" height="1.4" fill="#ffff00"/><rect x="76.71" y="403.87" width="1.4" height="1.4" fill="#ffff00"/><rect x="289.60" y="382.37" width="1.4" height="1.4" fill="#ffff00"/><rect x="372.04" y="402.61" width="1.4" height="1.4" fill="#ffff00"/><rect x="381.72" y="387.91" width="1.4" height="1.4" fill="#ffff00"/><rect x="344.49" y="399.94" width="1.4" height="1.4" fill="#ffff00"/><rect x="109.68" y="387.73" width="1.4" height="1.4" fill="#ffff00"/><rect x="144.33" y="400.07" width="1.4" height="1.4" fill="#ffff00"/><rect x="249.23" y="383.77" width="1.4" height="1.4" fill="#ffff00"/><rect x="333.18" y="382.58" width="1.4" height="1.4" fill="#ffff00"/><rect x="133.23" y="401.60" width="1.4" height="1.4" fill="#ffff00"/><rect x="355.70" y="400.77" width="1.4" height="1.4" fill="#ffff00"/><rect x="174.71" y="403.63" width="1.4" height="1.4" fill="#ffff00"/><rect x="108.64" y="382.85" width="1.4" height="1.4" fill="#ffff00"/><rect x="188.52" y="385.02" width="1.4" height="1.4" fill="#ffff00"/><rect x="209.31" y="402.03" width="1.4" height="1.4" fill="#ffff00"/><rect x="307.61" y="403.37" width="1.4" height="1.4" fill="#ffff00"/><rect x="427.08" y="400.67" width="1.4" height="1.4" fill="#ffff00"/><rect x="220.30" y="403.92" width="1.4" height="1.4" fill="#ffff00"/><rect x="279.06" y="401.37" width="1.4" height="1.4" fill="#ffff00"/><rect x="139.77" y="383.63" width="1.4" height="1.4" fill="#ffff00"/><rect x="363.49" y="385.29" width="1.4" height="1.4" fill="#ffff00"/><rect x="291.48" y="403.78" width="1.4" height="1.4" fill="#ffff00"/><rect x="136.14" y="385.67" width="1.4" height="1.4" fill="#ffff00"/><rect x="83.38" y="384.25" width="1.4" height="1.4" fill="#ffff00"/><rect x="146.63" y="385.47" width="1.4" height="1.4" fill="#ffff00"/><rect x="247.51" y="387.74" width="1.4" height="1.4" fill="#ffff00"/><rect x="65.78" y="402.64" width="1.4" height="1.4" fill="#ffff00"/><rect x="281.89" y="384.42" width="1.4" height="1.4" fill="#ffff00"/><rect x="24.95" y="383.31" width="1.4" height="1.4" fill="#ffff00"/><rect x="195.11" y="384.45" width="1.4" height="1.4" fill="#ffff00"/><rect x="268.16" y="384.73" width="1.4" height="1.4" fill="#ffff00"/><rect x="115.54" y="387.76" width="1.4" height="1.4" fill="#ffff00"/><rect x="359.63" y="385.23" width="1.4" height="1.4" fill="#ffff00"/><rect x="325.96" y="403.05" width="1.4" height="1.4" fill="#ffff00"/><rect x="341.43" y="400.61" width="1.4" height="1.4" fill="#ffff00"/><rect x="342.34" y="404.03" width="1.4" height="1.4" fill="#ffff00"/><rect x="300.16" y="400.64" width="1.4" height="1.4" fill="#ffff00"/><rect x="89.68" y="401.94" width="1.4" height="1.4" fill="#ffff00"/><rect x="101.32" y="403.88" width="1.4" height="1.4" fill="#ffff00"/><rect x="183.64" y="383.60" width="1.4" height="1.4" fill="#ffff00"/><rect x="240.47" y="385.26" width="1.4" height="1.4" fill="#ffff00"/><rect x="452.28" y="402.86" width="1.4" height="1.4" fill="#ffff00"/><rect x="295.95" y="382.68" width="1.4" height="1.4" fill="#ffff00"/><rect x="274.68" y="383.22" width="1.4" height="1.4" fill="#ffff00"/><rect x="235.13" y="401.44" width="1.4" height="1.4" fill="#ffff00"/><rect x="22.40" y="399.39" width="1.4" height="1.4" fill="#ffff00"/><rect x="32.70" y="335.30" width="1.4" height="1.4" fill="#ffff00"/><rect x="34.30" y="339.30" width="1.4" height="1.4" fill="#ffff00"/><rect x="42.10" y="337.00" width="1.4" height="1.4" fill="#ffff00"/><rect x="45.30" y="329.30" width="1.4" height="1.4" fill="#ffff00"/><rect x="59.30" y="333.05" width="1.4" height="1.4" fill="#ffff00"/><rect x="78.30" y="319.30" width="1.4" height="1.4" fill="#ffff00"/><rect x="81.30" y="338.10" width="1.4" height="1.4" fill="#ffff00"/><rect x="96.00" y="315.90" width="1.4" height="1.4" fill="#ffff00"/><rect x="96.00" y="340.10" width="1.4" height="1.4" fill="#ffff00"/><rect x="96.00" y="360.30" width="1.4" height="1.4" fill="#ffff00"/><rect x="104.60" y="333.05" width="1.4" height="1.4" fill="#ffff00"/><rect x="106.30" y="333.05" width="1.4" height="1.4" fill="#ffff00"/><rect x="113.60" y="317.30" width="1.4" height="1.4" fill="#ffff00"/><rect x="124.30" y="322.30" width="1.4" height="1.4" fill="#ffff00"/><rect x="126.10" y="319.30" width="1.4" height="1.4" fill="#ffff00"/><rect x="130.00" y="319.30" width="1.4" height="1.4" fill="#ffff00"/><rect x="130.30" y="335.30" width="1.4" height="1.4" fill="#ffff00"/><rect x="137.00" y="318.30" width="1.4" height="1.4" fill="#ffff00"/><rect x="144.80" y="335.30" width="1.4" height="1.4" fill="#ffff00"/><rect x="152.70" y="333.05" width="1.4" height="1.4" fill="#ffff00"/><rect x="158.30" y="338.10" width="1.4" height="1.4" fill="#ffff00"/><rect x="162.30" y="333.05" width="1.4" height="1.4" fill="#ffff00"/><rect x="181.90" y="319.30" width="1.4" height="1.4" fill="#ffff00"/><rect x="187.80" y="338.10" width="1.4" height="1.4" fill="#ffff00"/><rect x="196.80" y="318.30" width="1.4" height="1.4" fill="#ffff00"/><rect x="204.60" y="329.90" width="1.4" height="1.4" fill="#ffff00"/><rect x="206.20" y="335.30" width="1.4" height="1.4" fill="#ffff00"/><rect x="215.20" y="333.05" width="1.4" height="1.4" fill="#ffff00"/><rect x="226.90" y="331.30" width="1.4" height="1.4" fill="#ffff00"/><rect x="231.30" y="333.30" width="1.4" height="1.4" fill="#ffff00"/><rect x="165.30" y="367.30" width="1.4" height="1.4" fill="#ffff00"/><rect x="84.30" y="373.30" width="1.4" height="1.4" fill="#ffff00"/><rect x="199.30" y="373.30" width="1.4" height="1.4" fill="#ffff00"/><rect x="206.30" y="370.30" width="1.4" height="1.4" fill="#ffff00"/><rect x="288.30" y="316.30" width="1.4" height="1.4" fill="#ffff00"/><rect x="304.50" y="335.70" width="1.4" height="1.4" fill="#ffff00"/><rect x="307.70" y="339.00" width="1.4" height="1.4" fill="#ffff00"/><rect x="310.60" y="330.90" width="1.4" height="1.4" fill="#ffff00"/><rect x="314.60" y="318.30" width="1.4" height="1.4" fill="#ffff00"/><rect x="326.70" y="312.70" width="1.4" height="1.4" fill="#ffff00"/><rect x="332.00" y="318.30" width="1.4" height="1.4" fill="#ffff00"/><rect x="348.90" y="339.00" width="1.4" height="1.4" fill="#ffff00"/><rect x="352.20" y="334.50" width="1.4" height="1.4" fill="#ffff00"/><rect x="360.30" y="337.70" width="1.4" height="1.4" fill="#ffff00"/><rect x="398.60" y="330.90" width="1.4" height="1.4" fill="#ffff00"/><rect x="399.30" y="339.00" width="1.4" height="1.4" fill="#ffff00"/><rect x="401.80" y="308.70" width="1.4" height="1.4" fill="#ffff00"/><rect x="410.70" y="330.10" width="1.4" height="1.4" fill="#ffff00"/><rect x="412.70" y="339.00" width="1.4" height="1.4" fill="#ffff00"/><rect x="430.90" y="333.70" width="1.4" height="1.4" fill="#ffff00"/><rect x="433.70" y="324.80" width="1.4" height="1.4" fill="#ffff00"/><rect x="441.80" y="333.70" width="1.4" height="1.4" fill="#ffff00"/><rect x="443.80" y="348.60" width="1.4" height="1.4" fill="#ffff00"/><rect x="451.10" y="323.60" width="1.4" height="1.4" fill="#ffff00"/><rect x="454.30" y="335.70" width="1.4" height="1.4" fill="#ffff00"/><rect x="475.30" y="318.30" width="1.4" height="1.4" fill="#ffff00"/><rect x="487.30" y="314.30" width="1.4" height="1.4" fill="#ffff00"/><rect x="489.30" y="332.50" width="1.4" height="1.4" fill="#ffff00"/><rect x="299.70" y="377.30" width="1.4" height="1.4" fill="#ffff00"/><rect x="314.60" y="378.90" width="1.4" height="1.4" fill="#ffff00"/><rect x="404.60" y="378.90" width="1.4" height="1.4" fill="#ffff00"/><rect x="444.20" y="374.90" width="1.4" height="1.4" fill="#ffff00"/><rect x="447.00" y="386.30" width="1.4" height="1.4" fill="#ffff00"/><rect x="462.30" y="381.30" width="1.4" height="1.4" fill="#ffff00"/><rect x="469.30" y="381.30" width="1.4" height="1.4" fill="#ffff00"/><rect x="495.50" y="393.30" width="1.4" height="1.4" fill="#ffff00"/><rect x="498.70" y="396.30" width="1.4" height="1.4" fill="#ffff00"/><rect x="510.30" y="396.30" width="1.4" height="1.4" fill="#ffff00"/><rect x="514.30" y="385.30" width="1.4" height="1.4" fill="#ffff00"/></svg>
<div class="t" style="left:-545.80px;width:600px;text-align:right;transform-origin:100% 0;top:219.46px;font-size:16px;line-height:16px;font-weight:normal;color:#000;letter-spacing:0px;transform:scaleX(0.875);">2000</div>
<div class="t" style="left:-545.80px;width:600px;text-align:right;transform-origin:100% 0;top:321.46px;font-size:16px;line-height:16px;font-weight:normal;color:#000;letter-spacing:0px;transform:scaleX(0.875);">1500</div>
<div class="t" style="left:-545.80px;width:600px;text-align:right;transform-origin:100% 0;top:423.46px;font-size:16px;line-height:16px;font-weight:normal;color:#000;letter-spacing:0px;transform:scaleX(0.875);">1000</div>
<div class="t" style="left:-545.80px;width:600px;text-align:right;transform-origin:100% 0;top:525.46px;font-size:16px;line-height:16px;font-weight:normal;color:#000;letter-spacing:0px;transform:scaleX(0.875);">500</div>
<div class="t" style="left:574.50px;transform-origin:0 0;top:219.46px;font-size:16px;line-height:16px;font-weight:normal;color:#000;letter-spacing:0px;transform:scaleX(0.85);">0.40</div>
<div class="t" style="left:574.50px;transform-origin:0 0;top:321.46px;font-size:16px;line-height:16px;font-weight:normal;color:#000;letter-spacing:0px;transform:scaleX(0.85);">0.30</div>
<div class="t" style="left:574.50px;transform-origin:0 0;top:423.46px;font-size:16px;line-height:16px;font-weight:normal;color:#000;letter-spacing:0px;transform:scaleX(0.85);">0.20</div>
<div class="t" style="left:574.50px;transform-origin:0 0;top:525.46px;font-size:16px;line-height:16px;font-weight:normal;color:#000;letter-spacing:0px;transform:scaleX(0.85);">0.10</div>
<div class="t" style="left:-239.65px;width:600px;text-align:center;transform-origin:50% 0;top:642.96px;font-size:16px;line-height:16px;font-weight:normal;color:#000;letter-spacing:0px;transform:scaleX(0.85);">0</div>
<div class="t" style="left:-188.95px;width:600px;text-align:center;transform-origin:50% 0;top:642.96px;font-size:16px;line-height:16px;font-weight:normal;color:#000;letter-spacing:0px;transform:scaleX(0.85);">102</div>
<div class="t" style="left:-138.25px;width:600px;text-align:center;transform-origin:50% 0;top:642.96px;font-size:16px;line-height:16px;font-weight:normal;color:#000;letter-spacing:0px;transform:scaleX(0.85);">204</div>
<div class="t" style="left:-87.55px;width:600px;text-align:center;transform-origin:50% 0;top:642.96px;font-size:16px;line-height:16px;font-weight:normal;color:#000;letter-spacing:0px;transform:scaleX(0.85);">307</div>
<div class="t" style="left:-36.85px;width:600px;text-align:center;transform-origin:50% 0;top:642.96px;font-size:16px;line-height:16px;font-weight:normal;color:#000;letter-spacing:0px;transform:scaleX(0.85);">409</div>
<div class="t" style="left:13.85px;width:600px;text-align:center;transform-origin:50% 0;top:642.96px;font-size:16px;line-height:16px;font-weight:normal;color:#000;letter-spacing:0px;transform:scaleX(0.85);">512</div>
<div class="t" style="left:64.55px;width:600px;text-align:center;transform-origin:50% 0;top:642.96px;font-size:16px;line-height:16px;font-weight:normal;color:#000;letter-spacing:0px;transform:scaleX(0.85);">614</div>
<div class="t" style="left:115.25px;width:600px;text-align:center;transform-origin:50% 0;top:642.96px;font-size:16px;line-height:16px;font-weight:normal;color:#000;letter-spacing:0px;transform:scaleX(0.85);">716</div>
<div class="t" style="left:165.95px;width:600px;text-align:center;transform-origin:50% 0;top:642.96px;font-size:16px;line-height:16px;font-weight:normal;color:#000;letter-spacing:0px;transform:scaleX(0.85);">819</div>
<div class="t" style="left:216.65px;width:600px;text-align:center;transform-origin:50% 0;top:642.96px;font-size:16px;line-height:16px;font-weight:normal;color:#000;letter-spacing:0px;transform:scaleX(0.85);">921</div>
<div class="t" style="left:543.50px;transform-origin:0 0;top:642.96px;font-size:16px;line-height:16px;font-weight:normal;color:#000;letter-spacing:0px;transform:scaleX(0.85);">1024gB</div>
<div class="t" style="left:60.50px;transform-origin:0 0;top:209.46px;font-size:16px;line-height:16px;font-weight:normal;color:#000;letter-spacing:0px;transform:scaleX(0.85);">MB/s</div>
<div class="t" style="left:-32.00px;width:600px;text-align:right;transform-origin:100% 0;top:209.46px;font-size:16px;line-height:16px;font-weight:normal;color:#000;letter-spacing:0px;transform:scaleX(0.85);">ms</div>
<div class="t" style="left:64.00px;transform-origin:0 0;top:227.96px;font-size:16px;line-height:16px;font-weight:normal;color:#a8a8a8;letter-spacing:0px;transform:scaleX(0.9);">trial version</div>
<div class="r" style="left:625px;top:201px;width:97px;height:28px;box-sizing:border-box;border:2px solid #0078d7;box-shadow:inset 0 0 0 1px #5aa2e2;background:#e1e1e1"></div>
<div class="t" style="left:372.20px;width:600px;text-align:center;transform-origin:50% 0;top:207.76px;font-size:16px;line-height:16px;font-weight:normal;color:#000;letter-spacing:0px;transform:scaleX(0.82);">Start</div>
<div class="r" style="left:612px;top:243px;width:134px;height:1px;background:#a0a0a0"></div>
<div class="r" style="left:612px;top:294px;width:134px;height:1px;background:#a0a0a0"></div>
<div class="r" style="left:612px;top:390px;width:134px;height:1px;background:#a0a0a0"></div>
<div class="r" style="left:612px;top:527px;width:134px;height:1px;background:#a0a0a0"></div>
<svg class="r" style="left:619.5px;top:250px;" width="18" height="18" viewBox="0 0 18 18"><circle cx="8.75" cy="8.75" r="7.9" fill="#fff" stroke="#333" stroke-width="1.4"/><circle cx="8.75" cy="8.75" r="4.4" fill="#333"/></svg>
<svg class="r" style="left:619.5px;top:271px;" width="18" height="18" viewBox="0 0 18 18"><circle cx="8.75" cy="8.75" r="7.9" fill="#fff" stroke="#333" stroke-width="1.4"/></svg>
<div class="t" style="left:641.00px;transform-origin:0 0;top:251.86px;font-size:16px;line-height:16px;font-weight:normal;color:#000;letter-spacing:0px;transform:scaleX(0.85);">Read</div>
<div class="t" style="left:641.00px;transform-origin:0 0;top:273.06px;font-size:16px;line-height:16px;font-weight:normal;color:#000;letter-spacing:0px;transform:scaleX(0.846);">Write</div>
<svg class="r" style="left:620px;top:305px;" width="17" height="17" viewBox="0 0 17 17"><rect x="0.75" y="0.75" width="15.5" height="15.5" fill="#fff" stroke="#333" stroke-width="1.5"/></svg>
<div class="t" style="left:641.00px;transform-origin:0 0;top:306.16px;font-size:16px;line-height:16px;font-weight:normal;color:#000;letter-spacing:0px;transform:scaleX(0.849);">Short stroke</div>
<div class="r" style="left:620px;top:331px;width:82px;height:27px;box-sizing:border-box;border:1px solid #bcc0c6;background:#fff"></div>
<div class="r" style="left:678px;top:331px;width:24px;height:27px;box-sizing:border-box;border:2px solid #c2c5cb;background:#e4e4e4"></div>
<div class="r" style="left:680px;top:333px;width:20px;height:11px;box-sizing:border-box;border:1px solid #e2e2e2;background:#eeeeee"></div>
<div class="r" style="left:680px;top:345px;width:20px;height:10.5px;box-sizing:border-box;border:1px solid #e2e2e2;background:#eeeeee"></div>
<svg class="r" style="left:679px;top:333px;" width="22" height="24" viewBox="0 0 22 24"><polygon points="6.8,7.2 13.8,7.2 10.3,3.3" fill="#6a6a6a"/><polygon points="6.8,13.9 13.8,13.9 10.3,17.8" fill="#6a6a6a"/></svg>
<div class="t" style="left:623.50px;transform-origin:0 0;top:336.86px;font-size:16px;line-height:16px;font-weight:normal;color:#8c8c8c;letter-spacing:0px;transform:scaleX(0.85);">40</div>
<div class="t" style="left:716.00px;transform-origin:0 0;top:336.86px;font-size:16px;line-height:16px;font-weight:normal;color:#000;letter-spacing:0px;transform:scaleX(0.85);">gB</div>
<svg class="r" style="left:620px;top:370px;" width="17" height="17" viewBox="0 0 17 17"><rect x="0.75" y="0.75" width="15.5" height="15.5" fill="#fff" stroke="#333" stroke-width="1.5"/><polyline points="3.3,8.3 6.5,11.8 13.5,3.8" fill="none" stroke="#555" stroke-width="1.5"/></svg>
<div class="t" style="left:641.00px;transform-origin:0 0;top:371.26px;font-size:16px;line-height:16px;font-weight:normal;color:#000;letter-spacing:0px;transform:scaleX(0.849);">Transfer rate</div>
<div class="t" style="left:620.00px;transform-origin:0 0;top:394.96px;font-size:16px;line-height:16px;font-weight:normal;color:#000;letter-spacing:0px;transform:scaleX(0.83);">Minimum</div>
<div class="r" style="left:620.6px;top:414px;width:121.1px;height:18.6px;background:#000"></div>
<div class="t" style="left:381.00px;width:600px;text-align:center;transform-origin:50% 0;top:415.72px;font-size:16.4px;line-height:16.4px;font-weight:bold;color:#1ab4f4;letter-spacing:0px;">1419.7 MB/s</div>
<div class="t" style="left:620.00px;transform-origin:0 0;top:438.66px;font-size:16px;line-height:16px;font-weight:normal;color:#000;letter-spacing:0px;transform:scaleX(0.85);">Maximum</div>
<div class="r" style="left:620.6px;top:457px;width:121.1px;height:18.6px;background:#000"></div>
<div class="t" style="left:381.00px;width:600px;text-align:center;transform-origin:50% 0;top:458.72px;font-size:16.4px;line-height:16.4px;font-weight:bold;color:#1ab4f4;letter-spacing:0px;">1484.2 MB/s</div>
<div class="t" style="left:620.00px;transform-origin:0 0;top:478.26px;font-size:16px;line-height:16px;font-weight:normal;color:#000;letter-spacing:0px;transform:scaleX(0.85);">Average</div>
<div class="r" style="left:620.6px;top:498px;width:121.1px;height:18.6px;background:#000"></div>
<div class="t" style="left:381.00px;width:600px;text-align:center;transform-origin:50% 0;top:499.72px;font-size:16.4px;line-height:16.4px;font-weight:bold;color:#1ab4f4;letter-spacing:0px;">1455.3 MB/s</div>
<svg class="r" style="left:620px;top:535px;" width="17" height="17" viewBox="0 0 17 17"><rect x="0.75" y="0.75" width="15.5" height="15.5" fill="#fff" stroke="#333" stroke-width="1.5"/><polyline points="3.3,8.3 6.5,11.8 13.5,3.8" fill="none" stroke="#555" stroke-width="1.5"/></svg>
<div class="t" style="left:641.00px;transform-origin:0 0;top:536.46px;font-size:16px;line-height:16px;font-weight:normal;color:#000;letter-spacing:0px;transform:scaleX(0.853);">Access time</div>
<div class="r" style="left:620.6px;top:556px;width:121.1px;height:18.6px;background:#000"></div>
<div class="t" style="left:381.00px;width:600px;text-align:center;transform-origin:50% 0;top:557.72px;font-size:16.4px;line-height:16.4px;font-weight:bold;color:#f0f000;letter-spacing:0px;">0.035 ms</div>
<svg class="r" style="left:620px;top:580px;" width="17" height="17" viewBox="0 0 17 17"><rect x="0.75" y="0.75" width="15.5" height="15.5" fill="#fff" stroke="#333" stroke-width="1.5"/><polyline points="3.3,8.3 6.5,11.8 13.5,3.8" fill="none" stroke="#555" stroke-width="1.5"/></svg>
<div class="t" style="left:641.00px;transform-origin:0 0;top:581.46px;font-size:16px;line-height:16px;font-weight:normal;color:#000;letter-spacing:0px;transform:scaleX(0.835);">Burst rate</div>
<div class="r" style="left:620.6px;top:601px;width:121.1px;height:18.6px;background:#000"></div>
<div class="t" style="left:381.00px;width:600px;text-align:center;transform-origin:50% 0;top:602.72px;font-size:16.4px;line-height:16.4px;font-weight:bold;color:#ffffff;letter-spacing:0px;">499.4 MB/s</div>
<div class="t" style="left:619.50px;transform-origin:0 0;top:625.16px;font-size:16px;line-height:16px;font-weight:normal;color:#000;letter-spacing:0px;transform:scaleX(0.862);">CPU usage</div>
<div class="r" style="left:620.6px;top:645px;width:121.1px;height:18.6px;background:#000"></div>
<div class="t" style="left:381.00px;width:600px;text-align:center;transform-origin:50% 0;top:646.72px;font-size:16.4px;line-height:16.4px;font-weight:bold;color:#ffffff;letter-spacing:0px;">1.8%</div>
</body></html>
